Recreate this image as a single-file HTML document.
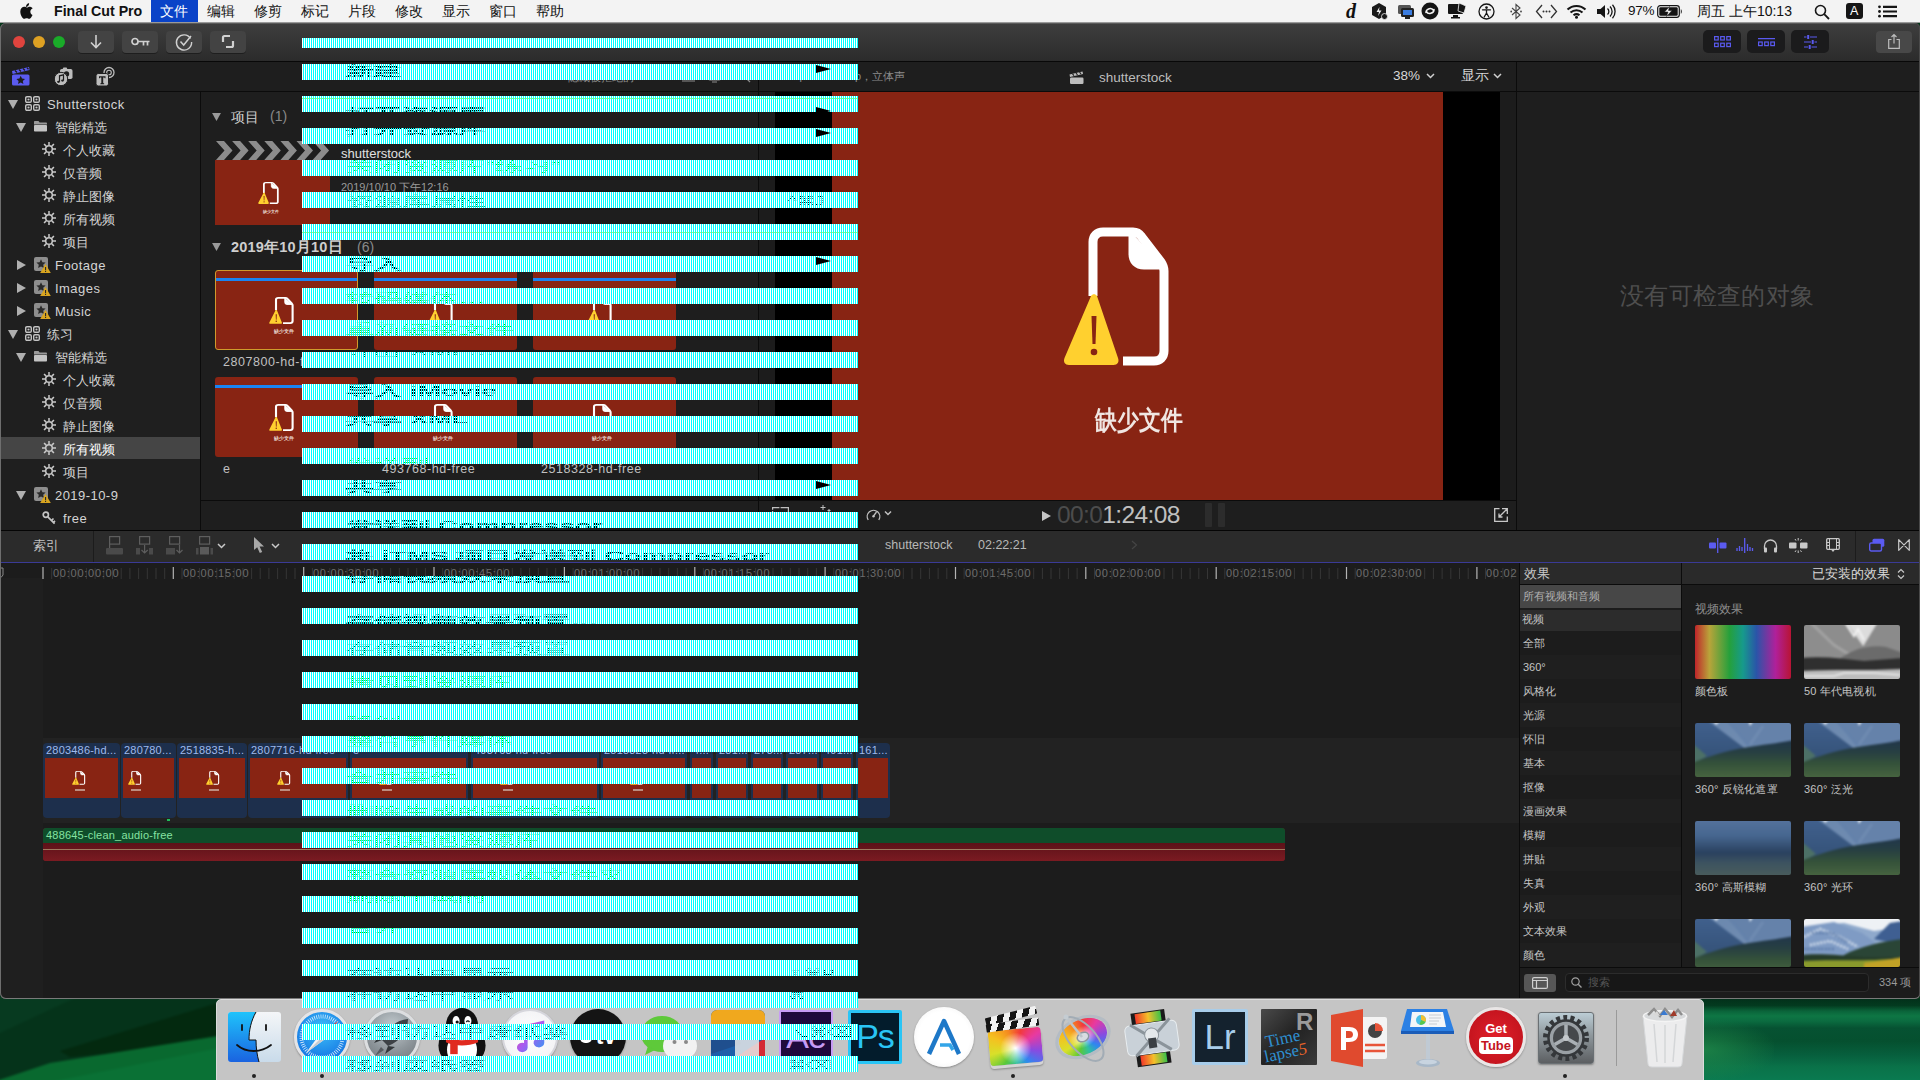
<!DOCTYPE html>
<html><head><meta charset="utf-8"><title>Final Cut Pro</title>
<style>
*{box-sizing:border-box;margin:0;padding:0}
html,body{width:1920px;height:1080px;overflow:hidden;background:#05381a;font-family:"Liberation Sans",sans-serif;}
#root{position:absolute;left:0;top:0;width:1920px;height:1080px;overflow:hidden;}
.abs{position:absolute}
.t{position:absolute;white-space:nowrap;line-height:1}
svg{position:absolute;overflow:visible}
#menubar{position:absolute;left:0;top:0;width:1920px;height:22px;background:#f3f3f3;}
#menubar .t{font-size:14px;color:#111;top:4px}
#win{position:absolute;left:0;top:23px;width:1920px;height:976px;background:#1e1e1e;border-radius:6px 5px 5px 6px;overflow:hidden;}
#winb{position:absolute;left:0;top:23px;width:1920px;height:976px;border-radius:6px 5px 5px 6px;box-shadow:inset 1px 0 0 #6e6e6e,inset 0 -1px 0 #7a7a7a,inset -1px 0 0 #4a4a4a;pointer-events:none}
.tb{position:absolute;height:22px;top:8px;width:36px;border-radius:4px;background:#434343;box-shadow:0 1px 0 rgba(0,0,0,.35)}
.side .t{font-size:13px;color:#d4d4d4}
.stripe{position:absolute;left:0;width:556px;height:16px;background:#fff;overflow:hidden}
.stripe:after{content:"";position:absolute;left:0;top:0;width:556px;height:16px;background-image:linear-gradient(90deg,rgba(0,255,255,0) 50%,#00ffff 50%);background-size:2px 16px;z-index:1}
.stripe span{position:absolute;white-space:nowrap;font-size:14px;line-height:16px;left:44px;color:#000;transform:scaleX(2);transform-origin:0 0;letter-spacing:0}
.stripe i{position:absolute;display:block;z-index:2}
.stripe b{position:absolute;display:block;z-index:1;left:0;width:556px;height:1px;background:#fff}
</style></head><body><div id="root">

<div class="abs" style="left:0;top:995px;width:960px;height:85px;background:#06381c"></div>
<div class="abs" style="left:0;top:995px;width:220px;height:85px;overflow:hidden"><svg style="left:-4px;top:-4px;filter:blur(1.2px)" width="228" height="93" viewBox="-4 -4 228 93"><rect x="-4" y="-4" width="228" height="93" fill="#05331a"/><path d="M-4 -4H90L-4 40z" fill="#073a20"/><path d="M60 56L224 6V48L70 62z" fill="#03290f"/><path d="M-4 86L50 68 224 40V93H-4z" fill="#09692f"/><path d="M40 89L224 52V93H40z" fill="#0a7135"/></svg></div>
<div class="abs" style="left:960px;top:999px;width:960px;height:81px;background:#0a6a42"></div>
<div class="abs" style="left:1700px;top:999px;width:220px;height:81px;background:linear-gradient(180deg,#02301a 0%,#033a1f 8%,#0a643a 15%,#0e7644 21%,#0b6c40 27%,#065232 36%,#05502f 52%,#07603e 70%,#0a7249 84%,#0a7a50 100%)"></div>
<div class="abs" style="left:1704px;top:1020px;width:70px;height:60px;background:radial-gradient(ellipse at 0% 50%,rgba(34,140,74,.75) 0%,rgba(34,140,74,0) 75%)"></div>

<div id="menubar">
<svg style="left:19px;top:3px" width="15" height="17" viewBox="0 0 170 200"><path fill="#111" d="M150 68c-1 1-20 11-20 35 0 27 24 37 25 37 0 1-4 13-12 25-8 11-15 21-27 21s-15-7-29-7c-13 0-18 7-29 7s-18-10-27-22C20 148 12 124 12 101c0-37 24-56 47-56 12 0 23 8 30 8 7 0 19-9 33-9 5 0 24 1 36 18zM106 33c6-7 10-17 10-26 0-1 0-3-1-4-9 0-20 6-27 14-5 6-10 16-10 26 0 1 0 3 1 3h2c8 0 19-6 25-13z"/></svg>
<div class="t" style="left:54px;font-weight:bold;font-size:14.2px;top:3.5px">Final Cut Pro</div>
<div class="abs" style="left:151px;top:0;width:47px;height:22px;background:#0a43c8"></div>
<div class="t" style="left:160px;color:#fff;font-size:14px;width:28.0px;text-align-last:justify">文件</div>
<div class="t" style="left:207px;font-size:14px;width:28.0px;text-align-last:justify">编辑</div>
<div class="t" style="left:254px;font-size:14px;width:28.0px;text-align-last:justify">修剪</div>
<div class="t" style="left:301px;font-size:14px;width:28.0px;text-align-last:justify">标记</div>
<div class="t" style="left:348px;font-size:14px;width:28.0px;text-align-last:justify">片段</div>
<div class="t" style="left:395px;font-size:14px;width:28.0px;text-align-last:justify">修改</div>
<div class="t" style="left:442px;font-size:14px;width:28.0px;text-align-last:justify">显示</div>
<div class="t" style="left:489px;font-size:14px;width:28.0px;text-align-last:justify">窗口</div>
<div class="t" style="left:536px;font-size:14px;width:28.0px;text-align-last:justify">帮助</div>
<div class="t" style="left:1346px;top:1px;font-family:'Liberation Serif',serif;font-style:italic;font-weight:bold;font-size:20px">d</div>
<svg style="left:1370px;top:3px" width="18" height="17" viewBox="0 0 18 17"><path d="M9 0l7 4v8l-7 4-7-4V4z" fill="#1a1a1a"/><path d="M9.5 4l-3 5h2.5l-1 4 3.5-5.5H9z" fill="#f3f3f3"/><circle cx="14.5" cy="13.5" r="3" fill="#1a1a1a" stroke="#f3f3f3" stroke-width=".8"/></svg>
<svg style="left:1397px;top:4px" width="18" height="16" viewBox="0 0 18 16"><rect x="1" y="1" width="13" height="9" rx="1.5" fill="#555"/><rect x="4" y="4" width="13" height="9" rx="1.5" fill="#222"/><rect x="6" y="6" width="9" height="5" fill="#3b7de0"/><rect x="8" y="13" width="5" height="2" fill="#222"/></svg>
<svg style="left:1421px;top:2px" width="18" height="18" viewBox="0 0 18 18"><circle cx="9" cy="9" r="8.5" fill="#151515"/><path d="M5 10.5c0-4 6-5.5 7.5-2M13 7.5c0 4-6 5.500-7.500 2" stroke="#f3f3f3" stroke-width="1.6" fill="none" stroke-linecap="round"/></svg>
<svg style="left:1447px;top:3px" width="20" height="17" viewBox="0 0 20 17"><rect x="1" y="1" width="15" height="10" rx="1" fill="#151515"/><rect x="6" y="12" width="5" height="2" fill="#151515"/><rect x="4" y="14" width="9" height="1.5" fill="#151515"/><path d="M12 0l7 3-2 7-6-2z" fill="#151515" stroke="#f3f3f3" stroke-width=".8"/></svg>
<svg style="left:1478px;top:3px" width="17" height="17" viewBox="0 0 17 17"><circle cx="8.500" cy="8.500" r="7.500" fill="none" stroke="#151515" stroke-width="1.3"/><circle cx="8.500" cy="4.600" r="1.300" fill="#151515"/><path d="M4.500 6.800h8M8.500 6.800v3.500M8.500 10l-2.300 4M8.500 10l2.300 4" stroke="#151515" stroke-width="1.300" fill="none" stroke-linecap="round"/></svg>
<svg style="left:1510px;top:3px" width="12" height="17" viewBox="0 0 12 17"><path d="M2 5l8 7-4 3.500V1.500L10 5l-8 7" stroke="#444" stroke-width="1.100" fill="none"/><circle cx="1.200" cy="8.500" r=".9" fill="#444"/><circle cx="11" cy="8.500" r=".9" fill="#444"/></svg>
<svg style="left:1535px;top:4px" width="23" height="15" viewBox="0 0 23 15"><path d="M7 1L1.500 7.500 7 14M16 1l5.500 6.500L16 14" stroke="#333" stroke-width="1.300" fill="none"/><circle cx="8.500" cy="7.500" r="1" fill="#333"/><circle cx="11.500" cy="7.500" r="1" fill="#333"/><circle cx="14.500" cy="7.500" r="1" fill="#333"/></svg>
<svg style="left:1566px;top:4px" width="21" height="15" viewBox="0 0 21 15"><path d="M1.500 5.500a13 13 0 0 1 18 0M4.500 8.500a9 9 0 0 1 12 0M7.500 11.300a4.800 4.800 0 0 1 6 0" stroke="#151515" stroke-width="2" fill="none" stroke-linecap="butt"/><circle cx="10.500" cy="13.300" r="1.500" fill="#151515"/></svg>
<svg style="left:1596px;top:4px" width="20" height="15" viewBox="0 0 20 15"><path d="M1 5h3.500L9 1v13L4.500 10H1z" fill="#151515"/><path d="M11.500 4.500a4 4 0 0 1 0 6M14 2.500a7 7 0 0 1 0 10M16.500 .8a10 10 0 0 1 0 13.400" stroke="#151515" stroke-width="1.300" fill="none"/></svg>
<div class="t" style="left:1628px;font-size:13.5px;top:4px;letter-spacing:-.3px">97%</div>
<svg style="left:1657px;top:5px" width="26" height="13" viewBox="0 0 26 13"><rect x=".7" y=".7" width="21.600" height="11.600" rx="2.500" fill="none" stroke="#151515" stroke-width="1.200"/><rect x="2.300" y="2.300" width="18.400" height="8.400" rx="1.200" fill="#151515"/><path d="M23.800 4.200v4.600c1.300-.4 1.300-4.200 0-4.600z" fill="#151515"/><path d="M12.500 1.500l-5 5.500h3.500l-1.500 4.500 5.500-6h-3.500z" fill="#f3f3f3" stroke="#151515" stroke-width=".5"/></svg>
<div class="t" style="left:1697px;font-size:14px;top:4px">周五 上午10:13</div>
<svg style="left:1814px;top:4px" width="16" height="16" viewBox="0 0 16 16"><circle cx="6.500" cy="6.500" r="5" fill="none" stroke="#151515" stroke-width="1.600"/><path d="M10.200 10.200l4.800 4.800" stroke="#151515" stroke-width="1.800"/></svg>
<div class="abs" style="left:1846px;top:3px;width:17px;height:16px;border-radius:3px;background:#151515"></div><div class="t" style="left:1850px;top:5px;color:#fff;font-size:12.500px">A</div>
<svg style="left:1878px;top:5px" width="20" height="13" viewBox="0 0 20 13"><circle cx="1.500" cy="1.800" r="1.400" fill="#151515"/><circle cx="1.500" cy="6.500" r="1.400" fill="#151515"/><circle cx="1.500" cy="11.200" r="1.400" fill="#151515"/><path d="M5 1.800h14M5 6.500h14M5 11.200h14" stroke="#151515" stroke-width="2.200"/></svg>
</div>
<div class="abs" style="left:0;top:22px;width:1920px;height:1px;background:#9a9a9a"></div>
<div id="win">
<div class="abs" style="left:0;top:0;width:1920px;height:38px;background:linear-gradient(#3e3e3e,#2b2b2b);border-top:1px solid #5a5a5a"></div>
<div class="abs" style="left:0;top:38px;width:1920px;height:1px;background:#080808"></div>
<div class="abs" style="left:13px;top:13px;width:12px;height:12px;border-radius:6px;background:#e0443e"></div>
<div class="abs" style="left:33px;top:13px;width:12px;height:12px;border-radius:6px;background:#dea123"></div>
<div class="abs" style="left:53px;top:13px;width:12px;height:12px;border-radius:6px;background:#1aab29"></div>
<div class="tb" style="left:78px"></div>
<div class="tb" style="left:122px"></div>
<div class="tb" style="left:166px"></div>
<div class="tb" style="left:210px"></div>
<svg style="left:90px;top:12px" width="12" height="14" viewBox="0 0 12 14"><path d="M6 0v12M1 7.500l5 5 5-5" stroke="#d0d0d0" stroke-width="1.600" fill="none"/></svg>
<svg style="left:131px;top:14px" width="19" height="10" viewBox="0 0 19 10"><circle cx="4" cy="4.500" r="3" fill="none" stroke="#d0d0d0" stroke-width="1.700"/><path d="M7 4.500h11.500M12.500 4.500v4M16.500 4.500v4" stroke="#d0d0d0" stroke-width="1.700" fill="none"/></svg>
<svg style="left:175px;top:10px" width="18" height="18" viewBox="0 0 18 18"><path d="M15.500 5.500A7.600 7.600 0 1 0 16.600 9" stroke="#d0d0d0" stroke-width="1.400" fill="none"/><path d="M5.500 8.500l3.200 3.500L16 3" stroke="#d0d0d0" stroke-width="1.500" fill="none"/></svg>
<svg style="left:221px;top:11px" width="14" height="15" viewBox="0 0 14 15"><path d="M7 2H3.500C2.500 2 2 2.500 2 3.500V8M7 13h3.500c1 0 1.500-.5 1.500-1.500V7" stroke="#d0d0d0" stroke-width="2.200" fill="none"/><path d="M7 2h2M7 13H5" stroke="#d0d0d0" stroke-width="2.200"/></svg>
<div class="abs" style="left:1703px;top:7px;width:38px;height:23px;border-radius:5px;background:#1b1b1c"></div>
<div class="abs" style="left:1747px;top:7px;width:38px;height:23px;border-radius:5px;background:#1b1b1c"></div>
<div class="abs" style="left:1791px;top:7px;width:38px;height:23px;border-radius:5px;background:#1b1b1c"></div>
<svg style="left:1714px;top:13px" width="17" height="12" viewBox="0 0 17 12"><g fill="none" stroke="#5a5af0" stroke-width="1.200"><rect x=".6" y=".6" width="3.600" height="3.400"/><rect x="6.700" y=".6" width="3.600" height="3.400"/><rect x="12.800" y=".6" width="3.600" height="3.400"/><rect x=".6" y="7.200" width="3.600" height="3.400"/><rect x="6.700" y="7.200" width="3.600" height="3.400"/><rect x="12.800" y="7.200" width="3.600" height="3.400"/></g></svg>
<svg style="left:1758px;top:15px" width="17" height="10" viewBox="0 0 17 10"><g fill="none" stroke="#5a5af0" stroke-width="1.200"><path d="M0 .6h17"/><rect x=".6" y="4" width="3.600" height="3.600"/><rect x="6.700" y="4" width="3.600" height="3.600"/><rect x="12.800" y="4" width="3.600" height="3.600"/></g></svg>
<svg style="left:1804px;top:12px" width="13" height="14" viewBox="0 0 13 14"><g stroke="#5a5af0" stroke-width="1.100" fill="none"><path d="M0 2h2.500M6 2h7M0 7h7M10.500 7H13M0 12h4M7.500 12H13"/><path d="M4.200 0v4M8.700 5v4M5.700 10v4" stroke-width="2"/></g></svg>
<div class="abs" style="left:1876px;top:8px;width:36px;height:22px;border-radius:4px;background:#484848"></div>
<svg style="left:1888px;top:11px" width="12" height="15" viewBox="0 0 12 15"><path d="M3.500 5.500H.7v8.800h10.600V5.500H8.500M6 9.500V.8M3.500 3L6 .6 8.500 3" stroke="#bdbdbd" stroke-width="1.200" fill="none"/></svg>
<div class="abs" style="left:0;top:39px;width:1920px;height:29px;background:#1e1e1e"></div>
<div class="abs" style="left:0;top:68px;width:1920px;height:1px;background:#0b0b0b"></div>
<svg style="left:12px;top:44px" width="18" height="19" viewBox="0 0 18 19"><path d="M0 4l17-4 .6 3L.6 7z" fill="#5b5bf0"/><path d="M3 3.500l2 2M7 2.500l2 2M11 1.600l2 2M15 .7l1.500 1.500" stroke="#1e1e1e" stroke-width="1.400"/><rect x="0" y="7.500" width="17.500" height="11" rx="1.500" fill="#5b5bf0"/><path d="M8.700 8.800l1.300 2.800 3 .3-2.200 2 .6 3-2.700-1.500L6 16.900l.6-3-2.200-2 3-.3z" fill="#1e1e1e"/></svg>
<svg style="left:54px;top:44px" width="19" height="19" viewBox="0 0 19 19"><rect x="6" y="2" width="12.500" height="10" rx="1.800" fill="#bdbdbd"/><rect x="9" y=".5" width="4" height="2.500" rx=".8" fill="#bdbdbd"/><circle cx="12.500" cy="7" r="2.700" fill="#1e1e1e"/><circle cx="7" cy="12" r="6.700" fill="#bdbdbd" stroke="#1e1e1e" stroke-width="1"/><path d="M5.500 14.800V8.800l4-1v5.800" stroke="#1e1e1e" stroke-width="1.200" fill="none"/><ellipse cx="4.500" cy="14.800" rx="1.400" ry="1.100" fill="#1e1e1e"/><ellipse cx="8.500" cy="13.600" rx="1.400" ry="1.100" fill="#1e1e1e"/></svg>
<svg style="left:96px;top:44px" width="19" height="19" viewBox="0 0 19 19"><circle cx="13" cy="5.500" r="5" fill="none" stroke="#bdbdbd" stroke-width="1.300"/><circle cx="13" cy="5.500" r="2.300" fill="none" stroke="#bdbdbd" stroke-width="1.100"/><rect x="0" y="6.500" width="12.500" height="12.500" rx="2.200" fill="#bdbdbd" stroke="#1e1e1e" stroke-width="1"/><path d="M3 9.300h6.500v2h-.8l-.3-.8H7.200v5.600l1 .3v.8H4.300v-.8l1-.3v-5.600H4.100l-.3.800H3z" fill="#1e1e1e"/></svg>
<div class="side abs" style="left:0;top:69px;width:200px;height:438px;background:#1f1f1f">

</div>
<div class="abs" style="left:200px;top:69px;width:1px;height:438px;background:#0b0b0b"></div>
<div class="abs" style="left:0;top:414px;width:200px;height:22px;background:#454545"></div>
<div class="side">
<svg style="left:8px;top:77px" width="10" height="9" viewBox="0 0 10 9"><path d="M0 0h10L5 9z" fill="#b0b0b0"/></svg>
<svg style="left:25px;top:73px" width="15" height="15" viewBox="0 0 15 15"><g fill="none" stroke="#c4c4c4" stroke-width="1.400"><rect x=".7" y=".7" width="5.600" height="5.600" rx="1.200"/><rect x="8.700" y=".7" width="5.600" height="5.600" rx="1.200"/><rect x=".7" y="8.700" width="5.600" height="5.600" rx="1.200"/><rect x="8.700" y="8.700" width="5.600" height="5.600" rx="1.200"/></g><g fill="#c4c4c4"><circle cx="3.500" cy="3.500" r="1.100"/><circle cx="11.500" cy="3.500" r="1.100"/><circle cx="3.500" cy="11.500" r="1.100"/><circle cx="11.500" cy="11.500" r="1.100"/></g></svg>
<div class="t" style="left:47px;top:75px;font-size:13px;letter-spacing:.45px">Shutterstock</div>
<svg style="left:16px;top:100px" width="10" height="9" viewBox="0 0 10 9"><path d="M0 0h10L5 9z" fill="#b0b0b0"/></svg>
<svg style="left:34px;top:98px" width="13" height="10.500" viewBox="0 0 15 12"><path d="M0 1.200C0 .5.500 0 1.200 0h4l1.300 1.800h7.300c.7 0 1.200.5 1.200 1.200V4H0z" fill="#9a9a9a"/><rect x="0" y="4.600" width="15" height="7.400" rx="1" fill="#c4c4c4"/></svg>
<div class="t" style="left:55px;top:98px;font-size:13px;width:52.0px;text-align-last:justify">智能精选</div>
<svg style="left:42px;top:119px" width="14" height="14" viewBox="0 0 14 14"><circle cx="7" cy="7" r="3.300" fill="none" stroke="#c9c9c9" stroke-width="1.500"/><path d="M7 0v3M7 11v3M0 7h3M11 7h3M2.050 2.050l2.100 2.100M9.850 9.850l2.100 2.100M2.050 11.950l2.100-2.100M9.850 4.150l2.100-2.100" stroke="#c9c9c9" stroke-width="1.500"/></svg>
<div class="t" style="left:63px;top:121px;font-size:13px;width:52.0px;text-align-last:justify">个人收藏</div>
<svg style="left:42px;top:142px" width="14" height="14" viewBox="0 0 14 14"><circle cx="7" cy="7" r="3.300" fill="none" stroke="#c9c9c9" stroke-width="1.500"/><path d="M7 0v3M7 11v3M0 7h3M11 7h3M2.050 2.050l2.100 2.100M9.850 9.850l2.100 2.100M2.050 11.950l2.100-2.100M9.850 4.150l2.100-2.100" stroke="#c9c9c9" stroke-width="1.500"/></svg>
<div class="t" style="left:63px;top:144px;font-size:13px;width:39.0px;text-align-last:justify">仅音频</div>
<svg style="left:42px;top:165px" width="14" height="14" viewBox="0 0 14 14"><circle cx="7" cy="7" r="3.300" fill="none" stroke="#c9c9c9" stroke-width="1.500"/><path d="M7 0v3M7 11v3M0 7h3M11 7h3M2.050 2.050l2.100 2.100M9.850 9.850l2.100 2.100M2.050 11.950l2.100-2.100M9.850 4.150l2.100-2.100" stroke="#c9c9c9" stroke-width="1.500"/></svg>
<div class="t" style="left:63px;top:167px;font-size:13px;width:52.0px;text-align-last:justify">静止图像</div>
<svg style="left:42px;top:188px" width="14" height="14" viewBox="0 0 14 14"><circle cx="7" cy="7" r="3.300" fill="none" stroke="#c9c9c9" stroke-width="1.500"/><path d="M7 0v3M7 11v3M0 7h3M11 7h3M2.050 2.050l2.100 2.100M9.850 9.850l2.100 2.100M2.050 11.950l2.100-2.100M9.850 4.150l2.100-2.100" stroke="#c9c9c9" stroke-width="1.500"/></svg>
<div class="t" style="left:63px;top:190px;font-size:13px;width:52.0px;text-align-last:justify">所有视频</div>
<svg style="left:42px;top:211px" width="14" height="14" viewBox="0 0 14 14"><circle cx="7" cy="7" r="3.300" fill="none" stroke="#c9c9c9" stroke-width="1.500"/><path d="M7 0v3M7 11v3M0 7h3M11 7h3M2.050 2.050l2.100 2.100M9.850 9.850l2.100 2.100M2.050 11.950l2.100-2.100M9.850 4.150l2.100-2.100" stroke="#c9c9c9" stroke-width="1.500"/></svg>
<div class="t" style="left:63px;top:213px;font-size:13px;width:26.0px;text-align-last:justify">项目</div>
<svg style="left:17px;top:237px" width="9" height="10" viewBox="0 0 9 10"><path d="M0 0v10l9-5z" fill="#b0b0b0"/></svg>
<svg style="left:34px;top:234px" width="17" height="16" viewBox="0 0 17 16"><rect x="0" y="0" width="14" height="14" rx="2" fill="#8e8e8e"/><path d="M7 2.200l1.400 3 3.200.4-2.400 2.200.7 3.200L7 9.400 4.100 11l.7-3.200L2.400 5.600l3.200-.4z" fill="#2a2a2a"/><path d="M11.500 7l5.300 9H6.200z" fill="#d9a520"/><rect x="11" y="10" width="1.100" height="3.200" fill="#2a2a2a"/><rect x="11" y="13.900" width="1.100" height="1.100" fill="#2a2a2a"/></svg>
<div class="t" style="left:55px;top:236px;font-size:13px;letter-spacing:.45px">Footage</div>
<svg style="left:17px;top:260px" width="9" height="10" viewBox="0 0 9 10"><path d="M0 0v10l9-5z" fill="#b0b0b0"/></svg>
<svg style="left:34px;top:257px" width="17" height="16" viewBox="0 0 17 16"><rect x="0" y="0" width="14" height="14" rx="2" fill="#8e8e8e"/><path d="M7 2.200l1.400 3 3.200.4-2.400 2.200.7 3.200L7 9.400 4.100 11l.7-3.200L2.400 5.600l3.200-.4z" fill="#2a2a2a"/><path d="M11.500 7l5.300 9H6.200z" fill="#d9a520"/><rect x="11" y="10" width="1.100" height="3.200" fill="#2a2a2a"/><rect x="11" y="13.900" width="1.100" height="1.100" fill="#2a2a2a"/></svg>
<div class="t" style="left:55px;top:259px;font-size:13px;letter-spacing:.45px">Images</div>
<svg style="left:17px;top:283px" width="9" height="10" viewBox="0 0 9 10"><path d="M0 0v10l9-5z" fill="#b0b0b0"/></svg>
<svg style="left:34px;top:280px" width="17" height="16" viewBox="0 0 17 16"><rect x="0" y="0" width="14" height="14" rx="2" fill="#8e8e8e"/><path d="M7 2.200l1.400 3 3.200.4-2.400 2.200.7 3.200L7 9.400 4.100 11l.7-3.200L2.400 5.600l3.200-.4z" fill="#2a2a2a"/><path d="M11.500 7l5.300 9H6.200z" fill="#d9a520"/><rect x="11" y="10" width="1.100" height="3.200" fill="#2a2a2a"/><rect x="11" y="13.900" width="1.100" height="1.100" fill="#2a2a2a"/></svg>
<div class="t" style="left:55px;top:282px;font-size:13px;letter-spacing:.45px">Music</div>
<svg style="left:8px;top:307px" width="10" height="9" viewBox="0 0 10 9"><path d="M0 0h10L5 9z" fill="#b0b0b0"/></svg>
<svg style="left:25px;top:303px" width="15" height="15" viewBox="0 0 15 15"><g fill="none" stroke="#c4c4c4" stroke-width="1.400"><rect x=".7" y=".7" width="5.600" height="5.600" rx="1.200"/><rect x="8.700" y=".7" width="5.600" height="5.600" rx="1.200"/><rect x=".7" y="8.700" width="5.600" height="5.600" rx="1.200"/><rect x="8.700" y="8.700" width="5.600" height="5.600" rx="1.200"/></g><g fill="#c4c4c4"><circle cx="3.500" cy="3.500" r="1.100"/><circle cx="11.500" cy="3.500" r="1.100"/><circle cx="3.500" cy="11.500" r="1.100"/><circle cx="11.500" cy="11.500" r="1.100"/></g></svg>
<div class="t" style="left:47px;top:305px;font-size:13px;width:26.0px;text-align-last:justify">练习</div>
<svg style="left:16px;top:330px" width="10" height="9" viewBox="0 0 10 9"><path d="M0 0h10L5 9z" fill="#b0b0b0"/></svg>
<svg style="left:34px;top:328px" width="13" height="10.500" viewBox="0 0 15 12"><path d="M0 1.200C0 .5.500 0 1.200 0h4l1.300 1.800h7.300c.7 0 1.200.5 1.200 1.200V4H0z" fill="#9a9a9a"/><rect x="0" y="4.600" width="15" height="7.400" rx="1" fill="#c4c4c4"/></svg>
<div class="t" style="left:55px;top:328px;font-size:13px;width:52.0px;text-align-last:justify">智能精选</div>
<svg style="left:42px;top:349px" width="14" height="14" viewBox="0 0 14 14"><circle cx="7" cy="7" r="3.300" fill="none" stroke="#c9c9c9" stroke-width="1.500"/><path d="M7 0v3M7 11v3M0 7h3M11 7h3M2.050 2.050l2.100 2.100M9.850 9.850l2.100 2.100M2.050 11.950l2.100-2.100M9.850 4.150l2.100-2.100" stroke="#c9c9c9" stroke-width="1.500"/></svg>
<div class="t" style="left:63px;top:351px;font-size:13px;width:52.0px;text-align-last:justify">个人收藏</div>
<svg style="left:42px;top:372px" width="14" height="14" viewBox="0 0 14 14"><circle cx="7" cy="7" r="3.300" fill="none" stroke="#c9c9c9" stroke-width="1.500"/><path d="M7 0v3M7 11v3M0 7h3M11 7h3M2.050 2.050l2.100 2.100M9.850 9.850l2.100 2.100M2.050 11.950l2.100-2.100M9.850 4.150l2.100-2.100" stroke="#c9c9c9" stroke-width="1.500"/></svg>
<div class="t" style="left:63px;top:374px;font-size:13px;width:39.0px;text-align-last:justify">仅音频</div>
<svg style="left:42px;top:395px" width="14" height="14" viewBox="0 0 14 14"><circle cx="7" cy="7" r="3.300" fill="none" stroke="#c9c9c9" stroke-width="1.500"/><path d="M7 0v3M7 11v3M0 7h3M11 7h3M2.050 2.050l2.100 2.100M9.850 9.850l2.100 2.100M2.050 11.950l2.100-2.100M9.850 4.150l2.100-2.100" stroke="#c9c9c9" stroke-width="1.500"/></svg>
<div class="t" style="left:63px;top:397px;font-size:13px;width:52.0px;text-align-last:justify">静止图像</div>
<svg style="left:42px;top:418px" width="14" height="14" viewBox="0 0 14 14"><circle cx="7" cy="7" r="3.300" fill="none" stroke="#c9c9c9" stroke-width="1.500"/><path d="M7 0v3M7 11v3M0 7h3M11 7h3M2.050 2.050l2.100 2.100M9.850 9.850l2.100 2.100M2.050 11.950l2.100-2.100M9.850 4.150l2.100-2.100" stroke="#c9c9c9" stroke-width="1.500"/></svg>
<div class="t" style="left:63px;top:420px;font-size:13px;color:#fff;width:52.0px;text-align-last:justify">所有视频</div>
<svg style="left:42px;top:441px" width="14" height="14" viewBox="0 0 14 14"><circle cx="7" cy="7" r="3.300" fill="none" stroke="#c9c9c9" stroke-width="1.500"/><path d="M7 0v3M7 11v3M0 7h3M11 7h3M2.050 2.050l2.100 2.100M9.850 9.850l2.100 2.100M2.050 11.950l2.100-2.100M9.850 4.150l2.100-2.100" stroke="#c9c9c9" stroke-width="1.500"/></svg>
<div class="t" style="left:63px;top:443px;font-size:13px;width:26.0px;text-align-last:justify">项目</div>
<svg style="left:16px;top:468px" width="10" height="9" viewBox="0 0 10 9"><path d="M0 0h10L5 9z" fill="#b0b0b0"/></svg>
<svg style="left:34px;top:464px" width="17" height="16" viewBox="0 0 17 16"><rect x="0" y="0" width="14" height="14" rx="2" fill="#8e8e8e"/><path d="M7 2.200l1.400 3 3.200.4-2.400 2.200.7 3.200L7 9.400 4.100 11l.7-3.200L2.400 5.600l3.200-.4z" fill="#2a2a2a"/><path d="M11.500 7l5.300 9H6.200z" fill="#d9a520"/><rect x="11" y="10" width="1.100" height="3.200" fill="#2a2a2a"/><rect x="11" y="13.900" width="1.100" height="1.100" fill="#2a2a2a"/></svg>
<div class="t" style="left:55px;top:466px;font-size:13px;letter-spacing:.45px">2019-10-9</div>
<svg style="left:42px;top:488px" width="14" height="14" viewBox="0 0 14 14"><circle cx="3.800" cy="3.800" r="2.600" fill="none" stroke="#c4c4c4" stroke-width="1.700"/><path d="M5.800 5.800l6.800 6.800M9.500 9.500l2-2M11.400 11.400l1.600-1.600" stroke="#c4c4c4" stroke-width="1.700" fill="none"/></svg>
<div class="t" style="left:63px;top:489px;font-size:13px;letter-spacing:.45px">free</div>
</div>
<div class="abs" style="left:201px;top:69px;width:557px;height:408px;background:#1e1e1e"></div>
<div class="abs" style="left:758px;top:39px;width:1px;height:468px;background:#0b0b0b"></div>
<div class="t" style="left:568px;top:49px;font-size:11px;color:#8c8c8c;width:66.0px;text-align-last:justify">隐藏被拒绝的</div>
<div class="t" style="left:775px;top:48px;font-size:11px;color:#8c8c8c">1080p HD 23.98p，立体声</div>
<svg style="left:212px;top:90px" width="9" height="8" viewBox="0 0 10 9"><path d="M0 0h10L5 9z" fill="#9a9a9a"/></svg>
<div class="t" style="left:231px;top:87px;font-size:14px;color:#cfcfcf;width:28.0px;text-align-last:justify">项目</div>
<div class="t" style="left:270px;top:86px;font-size:14px;color:#8a8a8a">(1)</div>
<svg style="left:216px;top:118px" width="114" height="19" viewBox="0 0 114 19"><path d="M0.0 0h8l8.500 9.500-8.500 9.500h-8l8.500-9.500z" fill="#8c8c8c"/><path d="M16.1 0h8l8.500 9.500-8.500 9.500h-8l8.500-9.500z" fill="#8c8c8c"/><path d="M32.2 0h8l8.500 9.500-8.500 9.500h-8l8.500-9.500z" fill="#8c8c8c"/><path d="M48.3 0h8l8.500 9.500-8.500 9.500h-8l8.500-9.500z" fill="#8c8c8c"/><path d="M64.4 0h8l8.500 9.500-8.500 9.500h-8l8.500-9.500z" fill="#8c8c8c"/><path d="M80.5 0h8l8.500 9.500-8.500 9.500h-8l8.500-9.500z" fill="#8c8c8c"/><path d="M96.6 0h8l8.500 9.500-8.500 9.500h-8l8.500-9.500z" fill="#8c8c8c"/></svg>
<div class="abs" style="left:215px;top:137px;width:115px;height:65px;background:#882413"></div>
<svg style="left:258.0px;top:159.0px" width="21.0" height="22.1" viewBox="0 0 107 138" preserveAspectRatio="none"><path d="M30 68V14c0-6 4-10 10-10h30c4 0 6 1 8 4l20 26c2 3 3 5 3 9v80c0 6-4 10-10 10H60" fill="none" stroke="#fff" stroke-width="9" stroke-linejoin="round"/><path d="M68 4v22c0 8 5 13 13 13h20" fill="#fff" stroke="#fff" stroke-width="5"/><path d="M28 68c1.500-2.500 4.500-2.500 6 0l21 62c1.500 4-.5 7-4.500 7H6c-4 0-6-3-4.500-7z" fill="#ffd02f"/><path d="M28.500 88h5l-1 28h-3z" fill="#882413"/><circle cx="31" cy="124" r="3.300" fill="#882413"/></svg><div class="t" style="left:251.0px;top:186.5px;width:40px;text-align:center;font-size:4.1px;color:#e8d8d0;font-weight:bold">缺少文件</div>
<div class="t" style="left:341px;top:124px;font-size:13px;color:#e0e0e0">shutterstock</div>
<div class="t" style="left:341px;top:159px;font-size:11px;color:#9a9a9a">2019/10/10 下午12:16</div>
<svg style="left:212px;top:220px" width="9" height="8" viewBox="0 0 10 9"><path d="M0 0h10L5 9z" fill="#9a9a9a"/></svg>
<div class="t" style="left:231px;top:217px;font-size:14.500px;color:#cfcfcf;font-weight:bold;letter-spacing:.2px">2019年10月10日</div>
<div class="t" style="left:357px;top:217px;font-size:14px;color:#8a8a8a">(6)</div>
<div class="abs" style="left:215px;top:247px;width:143px;height:80px;background:#882413;border-radius:3px;border:1px solid #d09a2c;"></div>
<div class="abs" style="left:216px;top:255px;width:141px;height:3px;background:#1a84f2"></div>
<svg style="left:269.0px;top:274.0px" width="25.0" height="27.0" viewBox="0 0 107 138" preserveAspectRatio="none"><path d="M30 68V14c0-6 4-10 10-10h30c4 0 6 1 8 4l20 26c2 3 3 5 3 9v80c0 6-4 10-10 10H60" fill="none" stroke="#fff" stroke-width="9" stroke-linejoin="round"/><path d="M68 4v22c0 8 5 13 13 13h20" fill="#fff" stroke="#fff" stroke-width="5"/><path d="M28 68c1.500-2.500 4.500-2.500 6 0l21 62c1.500 4-.5 7-4.500 7H6c-4 0-6-3-4.500-7z" fill="#ffd02f"/><path d="M28.500 88h5l-1 28h-3z" fill="#882413"/><circle cx="31" cy="124" r="3.300" fill="#882413"/></svg><div class="t" style="left:264.0px;top:306.5px;width:40px;text-align:center;font-size:4.9px;color:#e8d8d0;font-weight:bold">缺少文件</div>
<div class="t" style="left:223px;top:333px;font-size:12.500px;color:#c0c0c0;letter-spacing:.55px">2807800-hd-free</div>
<div class="abs" style="left:374px;top:247px;width:143px;height:80px;background:#882413;border-radius:3px;"></div>
<div class="abs" style="left:374px;top:255px;width:143px;height:3px;background:#1a84f2"></div>
<svg style="left:428.0px;top:274.0px" width="25.0" height="27.0" viewBox="0 0 107 138" preserveAspectRatio="none"><path d="M30 68V14c0-6 4-10 10-10h30c4 0 6 1 8 4l20 26c2 3 3 5 3 9v80c0 6-4 10-10 10H60" fill="none" stroke="#fff" stroke-width="9" stroke-linejoin="round"/><path d="M68 4v22c0 8 5 13 13 13h20" fill="#fff" stroke="#fff" stroke-width="5"/><path d="M28 68c1.500-2.500 4.500-2.500 6 0l21 62c1.500 4-.5 7-4.500 7H6c-4 0-6-3-4.500-7z" fill="#ffd02f"/><path d="M28.500 88h5l-1 28h-3z" fill="#882413"/><circle cx="31" cy="124" r="3.300" fill="#882413"/></svg><div class="t" style="left:423.0px;top:306.5px;width:40px;text-align:center;font-size:4.9px;color:#e8d8d0;font-weight:bold">缺少文件</div>
<div class="abs" style="left:533px;top:247px;width:143px;height:80px;background:#882413;border-radius:3px;"></div>
<div class="abs" style="left:533px;top:255px;width:143px;height:3px;background:#1a84f2"></div>
<svg style="left:587.0px;top:274.0px" width="25.0" height="27.0" viewBox="0 0 107 138" preserveAspectRatio="none"><path d="M30 68V14c0-6 4-10 10-10h30c4 0 6 1 8 4l20 26c2 3 3 5 3 9v80c0 6-4 10-10 10H60" fill="none" stroke="#fff" stroke-width="9" stroke-linejoin="round"/><path d="M68 4v22c0 8 5 13 13 13h20" fill="#fff" stroke="#fff" stroke-width="5"/><path d="M28 68c1.500-2.500 4.500-2.500 6 0l21 62c1.500 4-.5 7-4.500 7H6c-4 0-6-3-4.500-7z" fill="#ffd02f"/><path d="M28.500 88h5l-1 28h-3z" fill="#882413"/><circle cx="31" cy="124" r="3.300" fill="#882413"/></svg><div class="t" style="left:582.0px;top:306.5px;width:40px;text-align:center;font-size:4.9px;color:#e8d8d0;font-weight:bold">缺少文件</div>
<div class="abs" style="left:215px;top:354px;width:143px;height:80px;background:#882413;border-radius:3px;"></div>
<div class="abs" style="left:215px;top:362px;width:143px;height:3px;background:#1a84f2"></div>
<svg style="left:269.0px;top:381.0px" width="25.0" height="27.0" viewBox="0 0 107 138" preserveAspectRatio="none"><path d="M30 68V14c0-6 4-10 10-10h30c4 0 6 1 8 4l20 26c2 3 3 5 3 9v80c0 6-4 10-10 10H60" fill="none" stroke="#fff" stroke-width="9" stroke-linejoin="round"/><path d="M68 4v22c0 8 5 13 13 13h20" fill="#fff" stroke="#fff" stroke-width="5"/><path d="M28 68c1.500-2.500 4.500-2.500 6 0l21 62c1.500 4-.5 7-4.500 7H6c-4 0-6-3-4.500-7z" fill="#ffd02f"/><path d="M28.500 88h5l-1 28h-3z" fill="#882413"/><circle cx="31" cy="124" r="3.300" fill="#882413"/></svg><div class="t" style="left:264.0px;top:413.5px;width:40px;text-align:center;font-size:4.9px;color:#e8d8d0;font-weight:bold">缺少文件</div>
<div class="t" style="left:223px;top:440px;font-size:12.500px;color:#c0c0c0;letter-spacing:.55px">e</div>
<div class="abs" style="left:374px;top:354px;width:143px;height:80px;background:#882413;border-radius:3px;"></div>
<div class="abs" style="left:374px;top:362px;width:143px;height:3px;background:#1a84f2"></div>
<svg style="left:428.0px;top:381.0px" width="25.0" height="27.0" viewBox="0 0 107 138" preserveAspectRatio="none"><path d="M30 68V14c0-6 4-10 10-10h30c4 0 6 1 8 4l20 26c2 3 3 5 3 9v80c0 6-4 10-10 10H60" fill="none" stroke="#fff" stroke-width="9" stroke-linejoin="round"/><path d="M68 4v22c0 8 5 13 13 13h20" fill="#fff" stroke="#fff" stroke-width="5"/><path d="M28 68c1.500-2.500 4.500-2.500 6 0l21 62c1.500 4-.5 7-4.500 7H6c-4 0-6-3-4.500-7z" fill="#ffd02f"/><path d="M28.500 88h5l-1 28h-3z" fill="#882413"/><circle cx="31" cy="124" r="3.300" fill="#882413"/></svg><div class="t" style="left:423.0px;top:413.5px;width:40px;text-align:center;font-size:4.9px;color:#e8d8d0;font-weight:bold">缺少文件</div>
<div class="t" style="left:382px;top:440px;font-size:12.500px;color:#c0c0c0;letter-spacing:.55px">493768-hd-free</div>
<div class="abs" style="left:533px;top:354px;width:143px;height:80px;background:#882413;border-radius:3px;"></div>
<div class="abs" style="left:533px;top:362px;width:143px;height:3px;background:#1a84f2"></div>
<svg style="left:587.0px;top:381.0px" width="25.0" height="27.0" viewBox="0 0 107 138" preserveAspectRatio="none"><path d="M30 68V14c0-6 4-10 10-10h30c4 0 6 1 8 4l20 26c2 3 3 5 3 9v80c0 6-4 10-10 10H60" fill="none" stroke="#fff" stroke-width="9" stroke-linejoin="round"/><path d="M68 4v22c0 8 5 13 13 13h20" fill="#fff" stroke="#fff" stroke-width="5"/><path d="M28 68c1.500-2.500 4.500-2.500 6 0l21 62c1.500 4-.5 7-4.500 7H6c-4 0-6-3-4.500-7z" fill="#ffd02f"/><path d="M28.500 88h5l-1 28h-3z" fill="#882413"/><circle cx="31" cy="124" r="3.300" fill="#882413"/></svg><div class="t" style="left:582.0px;top:413.5px;width:40px;text-align:center;font-size:4.9px;color:#e8d8d0;font-weight:bold">缺少文件</div>
<div class="t" style="left:541px;top:440px;font-size:12.500px;color:#c0c0c0;letter-spacing:.55px">2518328-hd-free</div>
<div class="abs" style="left:201px;top:477px;width:557px;height:1px;background:#0b0b0b"></div>
<div class="abs" style="left:0px;top:507px;width:1920px;height:1px;background:#050505"></div>
<div class="abs" style="left:759px;top:69px;width:757px;height:408px;background:#1c1c1c"></div>
<div class="abs" style="left:775px;top:69px;width:725px;height:408px;background:#000"></div>
<div class="abs" style="left:832px;top:69px;width:611px;height:408px;background:#882413"></div>
<svg style="left:1063.0px;top:205.0px" width="107.0" height="138.0" viewBox="0 0 107 138" preserveAspectRatio="none"><path d="M30 68V14c0-6 4-10 10-10h30c4 0 6 1 8 4l20 26c2 3 3 5 3 9v80c0 6-4 10-10 10H60" fill="none" stroke="#fff" stroke-width="9" stroke-linejoin="round"/><path d="M68 4v22c0 8 5 13 13 13h20" fill="#fff" stroke="#fff" stroke-width="5"/><path d="M28 68c1.500-2.500 4.500-2.500 6 0l21 62c1.500 4-.5 7-4.500 7H6c-4 0-6-3-4.500-7z" fill="#ffd02f"/><path d="M28.500 88h5l-1 28h-3z" fill="#882413"/><circle cx="31" cy="124" r="3.300" fill="#882413"/></svg>
<div class="t" style="left:1087px;top:384px;width:100px;text-align:center;font-size:26px;color:#f0e6e2;font-weight:bold;transform:scaleX(.84)">缺少文件</div>
<svg style="left:1069px;top:48px" width="15" height="13" viewBox="0 0 15 13"><path d="M.5 3.500L13.500.5l.5 2.500L1 6z" fill="#bdbdbd"/><rect x="1" y="6.500" width="13.500" height="6.500" rx="1.200" fill="#bdbdbd"/><path d="M3.500 2.800l1.500 1.800M7 2l1.500 1.800M10.500 1.200L12 3" stroke="#1e1e1e" stroke-width="1.100"/></svg>
<div class="t" style="left:1099px;top:48px;font-size:13.500px;color:#bdbdbd">shutterstock</div>
<div class="t" style="left:1393px;top:46px;font-size:13.500px;color:#d8d8d8">38%</div>
<svg style="left:1426px;top:50px" width="9" height="6" viewBox="0 0 9 6"><path d="M1 1l3.500 3.500L8 1" stroke="#d0d0d0" stroke-width="1.500" fill="none"/></svg>
<div class="t" style="left:1461px;top:46px;font-size:13.500px;color:#d8d8d8;width:27.0px;text-align-last:justify">显示</div>
<svg style="left:1493px;top:50px" width="9" height="6" viewBox="0 0 9 6"><path d="M1 1l3.500 3.500L8 1" stroke="#d0d0d0" stroke-width="1.500" fill="none"/></svg>
<div class="abs" style="left:759px;top:477px;width:757px;height:30px;background:#1e1e1e"></div>
<div class="abs" style="left:759px;top:477px;width:757px;height:1px;background:#0b0b0b"></div>
<svg style="left:1042px;top:488px" width="9" height="10" viewBox="0 0 9 10"><path d="M0 0v10l9-5z" fill="#c4c4c4"/></svg>
<div class="t" style="left:1057px;top:480px;font-size:24.500px;color:#4c4c4c;letter-spacing:-.6px">00:0<span style="color:#c0c0c0">1:24:08</span></div>
<div class="abs" style="left:1205px;top:480px;width:7px;height:24px;background:#2c2c2c;border-radius:1px"></div><div class="abs" style="left:1218px;top:480px;width:7px;height:24px;background:#2c2c2c;border-radius:1px"></div>
<svg style="left:1494px;top:485px" width="14" height="14" viewBox="0 0 14 14"><path d="M5.500.700H.700v12.600h12.600V8.500" stroke="#c8c8c8" stroke-width="1.300" fill="none"/><path d="M5 9L13 1M8 .700h5.300V6M5 5.500V9h3.500" stroke="#c8c8c8" stroke-width="1.300" fill="none"/></svg>
<svg style="left:866px;top:485px" width="26" height="14" viewBox="0 0 26 14"><path d="M2.200 12A6.300 6.300 0 1 1 12.800 12" stroke="#c0c0c0" stroke-width="1.300" fill="none"/><path d="M7.500 8l3-4" stroke="#c0c0c0" stroke-width="1.300"/><circle cx="7.500" cy="8.300" r="1.200" fill="#c0c0c0"/><path d="M19 3.500l3 3 3-3" stroke="#c0c0c0" stroke-width="1.500" fill="none"/></svg>
<svg style="left:772px;top:483px" width="17" height="8" viewBox="0 0 17 8"><path d="M.6 8V1.600h15.800V8" stroke="#c0c0c0" stroke-width="1.200" fill="none" stroke-dasharray="3 1.200 9 1.200 20"/></svg>
<svg style="left:820px;top:482px" width="12" height="8" viewBox="0 0 12 8"><path d="M3 0v5M.5 2.500h5M9 4v3M7.500 5.500h3" stroke="#c0c0c0" stroke-width="1"/></svg>
<svg style="left:682px;top:48px" width="70" height="12" viewBox="0 0 70 12"><path d="M0 2h13M0 6h13M0 10h13" stroke="#8c8c8c" stroke-width="1.200"/><rect x="27" y="1" width="11" height="8" rx="1" fill="none" stroke="#8c8c8c" stroke-width="1.200"/><path d="M30 11h5" stroke="#8c8c8c" stroke-width="1.200"/><circle cx="62" cy="5" r="3.500" fill="none" stroke="#8c8c8c" stroke-width="1.200"/><path d="M64.500 7.500l3.500 3.500" stroke="#8c8c8c" stroke-width="1.300"/></svg>
<div class="abs" style="left:1516px;top:39px;width:1px;height:468px;background:#0b0b0b"></div>
<div class="abs" style="left:1517px;top:69px;width:403px;height:438px;background:#1e1e1e"></div>
<div class="t" style="left:1620px;top:261px;font-size:24px;letter-spacing:.3px;color:#4e4e4e;width:194.4px;text-align-last:justify">没有可检查的对象</div>
<svg width="1" height="1" style="left:0;top:0;opacity:.01"><defs>
<linearGradient id="sky" x1="0" y1="0" x2="1" y2="1"><stop offset="0" stop-color="#6a87ad"/><stop offset=".5" stop-color="#708cb1"/><stop offset="1" stop-color="#5c7aa2"/></linearGradient>
<linearGradient id="lm" x1="0" y1="0" x2="0" y2="1"><stop offset="0" stop-color="#41618e"/><stop offset="1" stop-color="#324f74"/></linearGradient>
<linearGradient id="rg" x1="0" y1="0" x2="0" y2="1"><stop offset="0" stop-color="#21364b"/><stop offset=".3" stop-color="#273f42"/><stop offset=".6" stop-color="#35523a"/><stop offset="1" stop-color="#4a6741"/></linearGradient>
<linearGradient id="blr" x1="0" y1="0" x2="0" y2="1"><stop offset="0" stop-color="#56749e"/><stop offset=".3" stop-color="#46668f"/><stop offset=".58" stop-color="#2a415f"/><stop offset=".75" stop-color="#3d5360"/><stop offset="1" stop-color="#4c5e5b"/></linearGradient>
<g id="mtn"><rect x="-3" y="-3" width="102" height="60" fill="url(#sky)"/><path d="M30 -3L99 -3V34H62L54 23z" fill="#6582aa"/><path d="M54 23l14-20" stroke="#6f8bb1" stroke-width="3" fill="none"/><path d="M54 23l-16-20" stroke="#6482ab" stroke-width="3" fill="none"/><path d="M-3 -3H12L52 27 -3 44z" fill="url(#lm)"/><path d="M-3 20L12 33 -3 42z" fill="#4c7066"/><path d="M17 -3l4 5 5-5zM53 -3l2 6 4-6z" fill="#dfe7f0"/><path d="M-3 40C14 33 34 27 54 24S84 20 99 17V57H-3z" fill="url(#rg)"/></g>
<g id="mbw"><rect x="-3" y="-3" width="102" height="60" fill="#dcdcdc"/><path d="M-3 -3H42L64 28 30 40H-3z" fill="#8d8d8d"/><path d="M6 -3l24 23 16 10" stroke="#a2a2a2" stroke-width="3" fill="none"/><path d="M99 -3H74L60 20 50 32H99z" fill="#8b8b8b"/><path d="M42 -1l8 12 4-7 6 11" stroke="#f2f2f2" stroke-width="2" fill="none"/><path d="M36 34C46 25 66 19 82 22L99 28V40H36z" fill="#6b6b6b"/><path d="M-3 33C20 31 40 34 60 36L99 33V48H-3z" fill="#2f2f2f"/><path d="M-3 46C30 44 60 46 99 44V57H-3z" fill="#bdbdbd"/><path d="M0 51h30l10-3h30l26 2" stroke="#eee" stroke-width="1.500" fill="none"/></g>
<g id="msn"><rect x="-3" y="-3" width="102" height="60" fill="#8fa9cc"/><path d="M-3 -3H99V8L70 12 40 4 14 6-3 12z" fill="#eef1f5"/><path d="M-3 8L30 3 58 14 72 24 50 38H-3z" fill="#7f9bc4"/><path d="M0 18l16-8 20 8 18 10M6 26l20-4 18 8" stroke="#d3deec" stroke-width="3" stroke-dasharray="2 1.500" fill="none"/><path d="M8 14l20 0 16 10M0 30l30 0" stroke="#4f6f9f" stroke-width="2.500" stroke-dasharray="1.500 2" fill="none"/><path d="M70 20L86 4 99 2V26z" fill="#3f5f92"/><path d="M40 36C54 28 80 22 99 20V44H40z" fill="#2a4536"/><path d="M-3 36C10 34 40 36 60 38L99 38V48H-3z" fill="#263c2a"/><path d="M-3 42C30 40 60 43 99 39V57H-3z" fill="#8a9a2c"/><path d="M60 44C76 42 88 40 99 38V57H60z" fill="#c2a226"/><path d="M-3 50C30 49 60 51 99 50V57H-3z" fill="#4d8a2e"/></g>
</defs></svg>
<div class="abs" style="left:0;top:508px;width:1920px;height:31px;background:#2b2b2b"></div>
<div class="abs" style="left:0;top:539px;width:1920px;height:1px;background:#3a3a96"></div>
<div class="t" style="left:33px;top:516px;font-size:13px;color:#c4c4c4;width:26.0px;text-align-last:justify">索引</div>
<div class="abs" style="left:93px;top:508px;width:1px;height:31px;background:#1c1c1c"></div>
<svg style="left:106px;top:513px" width="18" height="19" viewBox="0 0 18 19"><rect x="3.600" y=".6" width="10" height="7.500" fill="none" stroke="#5e5e5e" stroke-width="1.200"/><path d="M3.600 8v4" stroke="#5e5e5e" stroke-width="1.200"/><rect x="0" y="12" width="17" height="6.500" rx="1" fill="#4a4a4a"/></svg>
<svg style="left:136px;top:513px" width="18" height="19" viewBox="0 0 18 19"><rect x="3.600" y=".6" width="10" height="7.500" fill="none" stroke="#5e5e5e" stroke-width="1.200"/><rect x="0" y="12" width="4" height="6.500" fill="#4a4a4a"/><rect x="13" y="12" width="4" height="6.500" fill="#4a4a4a"/><path d="M8.600 9v8M5.500 14l3.100 3 3.100-3" stroke="#5e5e5e" stroke-width="1.200" fill="none"/></svg>
<svg style="left:166px;top:513px" width="18" height="19" viewBox="0 0 18 19"><rect x="3.600" y=".6" width="10" height="7.500" fill="none" stroke="#5e5e5e" stroke-width="1.200"/><rect x="0" y="12" width="9" height="6.500" fill="#4a4a4a"/><path d="M13.500 9v8M10.500 14l3 3 3-3" stroke="#5e5e5e" stroke-width="1.200" fill="none"/></svg>
<svg style="left:196px;top:513px" width="18" height="19" viewBox="0 0 18 19"><rect x="3.600" y=".6" width="10" height="7.500" fill="none" stroke="#5e5e5e" stroke-width="1.200"/><rect x="0" y="12" width="2.500" height="6.500" fill="#4a4a4a"/><rect x="4" y="11" width="9" height="7.500" fill="#5a5a5a"/><rect x="14.500" y="12" width="2.500" height="6.500" fill="#4a4a4a"/></svg>
<svg style="left:217px;top:520px" width="9" height="6" viewBox="0 0 9 6"><path d="M1 1l3.500 3.500L8 1" stroke="#c8c8c8" stroke-width="1.500" fill="none"/></svg>
<svg style="left:254px;top:514px" width="11" height="17" viewBox="0 0 11 17"><path d="M0 0v13l3.200-2.800L5.800 16l2.400-1L5.600 9.500H10z" fill="#a8a8a8"/></svg>
<svg style="left:271px;top:520px" width="9" height="6" viewBox="0 0 9 6"><path d="M1 1l3.500 3.500L8 1" stroke="#c8c8c8" stroke-width="1.500" fill="none"/></svg>
<div class="t" style="left:885px;top:516px;font-size:12.500px;color:#b8b8b8">shutterstock</div>
<div class="t" style="left:978px;top:516px;font-size:12.500px;color:#b8b8b8">02:22:21</div>
<svg style="left:1131px;top:517px" width="7" height="10" viewBox="0 0 7 10"><path d="M1 1l4.500 4L1 9" stroke="#444" stroke-width="1.300" fill="none"/></svg>
<svg style="left:1709px;top:515px" width="18" height="15" viewBox="0 0 18 15"><rect x="0" y="4.500" width="7" height="6" rx="1" fill="#5b5bf0"/><rect x="10.500" y="4.500" width="7" height="6" rx="1" fill="#5b5bf0"/><path d="M8.700 0v15" stroke="#5b5bf0" stroke-width="1.300"/></svg>
<svg style="left:1736px;top:515px" width="18" height="15" viewBox="0 0 18 15"><path d="M1 10v3M3.500 8v5M6 9v4M8.700 0v15M11.500 6v7M14 9v4M16.500 10v3" stroke="#5b5bf0" stroke-width="1.300"/></svg>
<svg style="left:1763px;top:516px" width="15" height="14" viewBox="0 0 15 14"><path d="M1.500 10V7a6 6 0 0 1 12 0v3" stroke="#c8c8c8" stroke-width="1.300" fill="none"/><rect x="1" y="8.500" width="3" height="5" rx="1" fill="#c8c8c8"/><rect x="11" y="8.500" width="3" height="5" rx="1" fill="#c8c8c8"/></svg>
<svg style="left:1789px;top:515px" width="19" height="15" viewBox="0 0 19 15"><rect x="0" y="4.500" width="7.500" height="6" rx="1" fill="#c8c8c8"/><rect x="11" y="4.500" width="7.500" height="6" rx="1" fill="#c8c8c8"/><path d="M9.200 0v2.500M9.200 12.500V15M6 1l1 1.600M12.500 1l-1 1.600M6 14l1-1.600M12.500 14l-1-1.600" stroke="#c8c8c8" stroke-width="1"/></svg>
<svg style="left:1826px;top:515px" width="14" height="14" viewBox="0 0 14 14"><rect x=".7" y=".7" width="12.600" height="10.600" rx="1" fill="none" stroke="#c8c8c8" stroke-width="1.300"/><path d="M3.500 1v10M10.500 1v10M1 4.500h2.500M1 7.500h2.500M10.500 4.500H13M10.500 7.500H13" stroke="#c8c8c8" stroke-width="1"/><path d="M5 11.500h4L7 14z" fill="#c8c8c8"/></svg>
<div class="abs" style="left:1855px;top:508px;width:1px;height:31px;background:#1c1c1c"></div>
<svg style="left:1869px;top:515px" width="16" height="14" viewBox="0 0 16 14"><rect x="3.500" y=".7" width="11.800" height="8" rx="1.500" fill="#5b5bf0"/><rect x=".7" y="5" width="11.800" height="8" rx="1.500" fill="#2b2b2b" stroke="#5b5bf0" stroke-width="1.400"/></svg>
<svg style="left:1898px;top:516px" width="12" height="12" viewBox="0 0 12 12"><path d="M.7.7v10.600L11.300.7v10.600z" stroke="#c8c8c8" stroke-width="1.200" fill="none" stroke-linejoin="round"/></svg>
<div class="abs" style="left:0;top:540px;width:1520px;height:435px;background:#1c1c1c"></div>
<div class="abs" style="left:0;top:555px;width:43px;height:435px;background:#1f1f1f"></div>
<div class="abs" style="left:43px;top:715px;width:1477px;height:85px;background:#222222"></div>
<svg style="left:0;top:540px" width="1520" height="22" viewBox="0 0 1520 22"><path d="M43.0 4v12" stroke="#b4b4b4" stroke-width="1.200"/><path d="M51.7 5v11" stroke="#363636" stroke-width="1"/><path d="M60.4 5v11" stroke="#363636" stroke-width="1"/><path d="M69.1 5v11" stroke="#363636" stroke-width="1"/><path d="M77.8 5v11" stroke="#363636" stroke-width="1"/><path d="M86.4 5v11" stroke="#363636" stroke-width="1"/><path d="M95.1 5v11" stroke="#363636" stroke-width="1"/><path d="M103.8 5v11" stroke="#363636" stroke-width="1"/><path d="M112.5 5v11" stroke="#363636" stroke-width="1"/><path d="M121.2 5v11" stroke="#363636" stroke-width="1"/><path d="M129.9 5v11" stroke="#363636" stroke-width="1"/><path d="M138.6 5v11" stroke="#363636" stroke-width="1"/><path d="M147.3 5v11" stroke="#363636" stroke-width="1"/><path d="M156.0 5v11" stroke="#363636" stroke-width="1"/><path d="M164.7 5v11" stroke="#363636" stroke-width="1"/><path d="M173.3 4v12" stroke="#b4b4b4" stroke-width="1.200"/><path d="M182.0 5v11" stroke="#363636" stroke-width="1"/><path d="M190.7 5v11" stroke="#363636" stroke-width="1"/><path d="M199.4 5v11" stroke="#363636" stroke-width="1"/><path d="M208.1 5v11" stroke="#363636" stroke-width="1"/><path d="M216.8 5v11" stroke="#363636" stroke-width="1"/><path d="M225.5 5v11" stroke="#363636" stroke-width="1"/><path d="M234.2 5v11" stroke="#363636" stroke-width="1"/><path d="M242.9 5v11" stroke="#363636" stroke-width="1"/><path d="M251.6 5v11" stroke="#363636" stroke-width="1"/><path d="M260.2 5v11" stroke="#363636" stroke-width="1"/><path d="M268.9 5v11" stroke="#363636" stroke-width="1"/><path d="M277.6 5v11" stroke="#363636" stroke-width="1"/><path d="M286.3 5v11" stroke="#363636" stroke-width="1"/><path d="M295.0 5v11" stroke="#363636" stroke-width="1"/><path d="M303.7 4v12" stroke="#b4b4b4" stroke-width="1.200"/><path d="M312.4 5v11" stroke="#363636" stroke-width="1"/><path d="M321.1 5v11" stroke="#363636" stroke-width="1"/><path d="M329.8 5v11" stroke="#363636" stroke-width="1"/><path d="M338.5 5v11" stroke="#363636" stroke-width="1"/><path d="M347.1 5v11" stroke="#363636" stroke-width="1"/><path d="M355.8 5v11" stroke="#363636" stroke-width="1"/><path d="M364.5 5v11" stroke="#363636" stroke-width="1"/><path d="M373.2 5v11" stroke="#363636" stroke-width="1"/><path d="M381.9 5v11" stroke="#363636" stroke-width="1"/><path d="M390.6 5v11" stroke="#363636" stroke-width="1"/><path d="M399.3 5v11" stroke="#363636" stroke-width="1"/><path d="M408.0 5v11" stroke="#363636" stroke-width="1"/><path d="M416.7 5v11" stroke="#363636" stroke-width="1"/><path d="M425.4 5v11" stroke="#363636" stroke-width="1"/><path d="M434.0 4v12" stroke="#b4b4b4" stroke-width="1.200"/><path d="M442.7 5v11" stroke="#363636" stroke-width="1"/><path d="M451.4 5v11" stroke="#363636" stroke-width="1"/><path d="M460.1 5v11" stroke="#363636" stroke-width="1"/><path d="M468.8 5v11" stroke="#363636" stroke-width="1"/><path d="M477.5 5v11" stroke="#363636" stroke-width="1"/><path d="M486.2 5v11" stroke="#363636" stroke-width="1"/><path d="M494.9 5v11" stroke="#363636" stroke-width="1"/><path d="M503.6 5v11" stroke="#363636" stroke-width="1"/><path d="M512.3 5v11" stroke="#363636" stroke-width="1"/><path d="M520.9 5v11" stroke="#363636" stroke-width="1"/><path d="M529.6 5v11" stroke="#363636" stroke-width="1"/><path d="M538.3 5v11" stroke="#363636" stroke-width="1"/><path d="M547.0 5v11" stroke="#363636" stroke-width="1"/><path d="M555.7 5v11" stroke="#363636" stroke-width="1"/><path d="M564.4 4v12" stroke="#b4b4b4" stroke-width="1.200"/><path d="M573.1 5v11" stroke="#363636" stroke-width="1"/><path d="M581.8 5v11" stroke="#363636" stroke-width="1"/><path d="M590.5 5v11" stroke="#363636" stroke-width="1"/><path d="M599.2 5v11" stroke="#363636" stroke-width="1"/><path d="M607.9 5v11" stroke="#363636" stroke-width="1"/><path d="M616.5 5v11" stroke="#363636" stroke-width="1"/><path d="M625.2 5v11" stroke="#363636" stroke-width="1"/><path d="M633.9 5v11" stroke="#363636" stroke-width="1"/><path d="M642.6 5v11" stroke="#363636" stroke-width="1"/><path d="M651.3 5v11" stroke="#363636" stroke-width="1"/><path d="M660.0 5v11" stroke="#363636" stroke-width="1"/><path d="M668.7 5v11" stroke="#363636" stroke-width="1"/><path d="M677.4 5v11" stroke="#363636" stroke-width="1"/><path d="M686.1 5v11" stroke="#363636" stroke-width="1"/><path d="M694.8 4v12" stroke="#b4b4b4" stroke-width="1.200"/><path d="M703.4 5v11" stroke="#363636" stroke-width="1"/><path d="M712.1 5v11" stroke="#363636" stroke-width="1"/><path d="M720.8 5v11" stroke="#363636" stroke-width="1"/><path d="M729.5 5v11" stroke="#363636" stroke-width="1"/><path d="M738.2 5v11" stroke="#363636" stroke-width="1"/><path d="M746.9 5v11" stroke="#363636" stroke-width="1"/><path d="M755.6 5v11" stroke="#363636" stroke-width="1"/><path d="M764.3 5v11" stroke="#363636" stroke-width="1"/><path d="M773.0 5v11" stroke="#363636" stroke-width="1"/><path d="M781.7 5v11" stroke="#363636" stroke-width="1"/><path d="M790.3 5v11" stroke="#363636" stroke-width="1"/><path d="M799.0 5v11" stroke="#363636" stroke-width="1"/><path d="M807.7 5v11" stroke="#363636" stroke-width="1"/><path d="M816.4 5v11" stroke="#363636" stroke-width="1"/><path d="M825.1 4v12" stroke="#b4b4b4" stroke-width="1.200"/><path d="M833.8 5v11" stroke="#363636" stroke-width="1"/><path d="M842.5 5v11" stroke="#363636" stroke-width="1"/><path d="M851.2 5v11" stroke="#363636" stroke-width="1"/><path d="M859.9 5v11" stroke="#363636" stroke-width="1"/><path d="M868.6 5v11" stroke="#363636" stroke-width="1"/><path d="M877.2 5v11" stroke="#363636" stroke-width="1"/><path d="M885.9 5v11" stroke="#363636" stroke-width="1"/><path d="M894.6 5v11" stroke="#363636" stroke-width="1"/><path d="M903.3 5v11" stroke="#363636" stroke-width="1"/><path d="M912.0 5v11" stroke="#363636" stroke-width="1"/><path d="M920.7 5v11" stroke="#363636" stroke-width="1"/><path d="M929.4 5v11" stroke="#363636" stroke-width="1"/><path d="M938.1 5v11" stroke="#363636" stroke-width="1"/><path d="M946.8 5v11" stroke="#363636" stroke-width="1"/><path d="M955.5 4v12" stroke="#b4b4b4" stroke-width="1.200"/><path d="M964.1 5v11" stroke="#363636" stroke-width="1"/><path d="M972.8 5v11" stroke="#363636" stroke-width="1"/><path d="M981.5 5v11" stroke="#363636" stroke-width="1"/><path d="M990.2 5v11" stroke="#363636" stroke-width="1"/><path d="M998.9 5v11" stroke="#363636" stroke-width="1"/><path d="M1007.6 5v11" stroke="#363636" stroke-width="1"/><path d="M1016.3 5v11" stroke="#363636" stroke-width="1"/><path d="M1025.0 5v11" stroke="#363636" stroke-width="1"/><path d="M1033.7 5v11" stroke="#363636" stroke-width="1"/><path d="M1042.4 5v11" stroke="#363636" stroke-width="1"/><path d="M1051.0 5v11" stroke="#363636" stroke-width="1"/><path d="M1059.7 5v11" stroke="#363636" stroke-width="1"/><path d="M1068.4 5v11" stroke="#363636" stroke-width="1"/><path d="M1077.1 5v11" stroke="#363636" stroke-width="1"/><path d="M1085.8 4v12" stroke="#b4b4b4" stroke-width="1.200"/><path d="M1094.5 5v11" stroke="#363636" stroke-width="1"/><path d="M1103.2 5v11" stroke="#363636" stroke-width="1"/><path d="M1111.9 5v11" stroke="#363636" stroke-width="1"/><path d="M1120.6 5v11" stroke="#363636" stroke-width="1"/><path d="M1129.3 5v11" stroke="#363636" stroke-width="1"/><path d="M1137.9 5v11" stroke="#363636" stroke-width="1"/><path d="M1146.6 5v11" stroke="#363636" stroke-width="1"/><path d="M1155.3 5v11" stroke="#363636" stroke-width="1"/><path d="M1164.0 5v11" stroke="#363636" stroke-width="1"/><path d="M1172.7 5v11" stroke="#363636" stroke-width="1"/><path d="M1181.4 5v11" stroke="#363636" stroke-width="1"/><path d="M1190.1 5v11" stroke="#363636" stroke-width="1"/><path d="M1198.8 5v11" stroke="#363636" stroke-width="1"/><path d="M1207.5 5v11" stroke="#363636" stroke-width="1"/><path d="M1216.2 4v12" stroke="#b4b4b4" stroke-width="1.200"/><path d="M1224.8 5v11" stroke="#363636" stroke-width="1"/><path d="M1233.5 5v11" stroke="#363636" stroke-width="1"/><path d="M1242.2 5v11" stroke="#363636" stroke-width="1"/><path d="M1250.9 5v11" stroke="#363636" stroke-width="1"/><path d="M1259.6 5v11" stroke="#363636" stroke-width="1"/><path d="M1268.3 5v11" stroke="#363636" stroke-width="1"/><path d="M1277.0 5v11" stroke="#363636" stroke-width="1"/><path d="M1285.7 5v11" stroke="#363636" stroke-width="1"/><path d="M1294.4 5v11" stroke="#363636" stroke-width="1"/><path d="M1303.1 5v11" stroke="#363636" stroke-width="1"/><path d="M1311.7 5v11" stroke="#363636" stroke-width="1"/><path d="M1320.4 5v11" stroke="#363636" stroke-width="1"/><path d="M1329.1 5v11" stroke="#363636" stroke-width="1"/><path d="M1337.8 5v11" stroke="#363636" stroke-width="1"/><path d="M1346.5 4v12" stroke="#b4b4b4" stroke-width="1.200"/><path d="M1355.2 5v11" stroke="#363636" stroke-width="1"/><path d="M1363.9 5v11" stroke="#363636" stroke-width="1"/><path d="M1372.6 5v11" stroke="#363636" stroke-width="1"/><path d="M1381.3 5v11" stroke="#363636" stroke-width="1"/><path d="M1390.0 5v11" stroke="#363636" stroke-width="1"/><path d="M1398.6 5v11" stroke="#363636" stroke-width="1"/><path d="M1407.3 5v11" stroke="#363636" stroke-width="1"/><path d="M1416.0 5v11" stroke="#363636" stroke-width="1"/><path d="M1424.7 5v11" stroke="#363636" stroke-width="1"/><path d="M1433.4 5v11" stroke="#363636" stroke-width="1"/><path d="M1442.1 5v11" stroke="#363636" stroke-width="1"/><path d="M1450.8 5v11" stroke="#363636" stroke-width="1"/><path d="M1459.5 5v11" stroke="#363636" stroke-width="1"/><path d="M1468.2 5v11" stroke="#363636" stroke-width="1"/><path d="M1476.9 4v12" stroke="#b4b4b4" stroke-width="1.200"/><path d="M1485.5 5v11" stroke="#363636" stroke-width="1"/><path d="M1494.2 5v11" stroke="#363636" stroke-width="1"/><path d="M1502.9 5v11" stroke="#363636" stroke-width="1"/><path d="M1511.6 5v11" stroke="#363636" stroke-width="1"/><path d="M0 5h3v7l-2 2.500" stroke="#8a8a8a" stroke-width="1" fill="none"/></svg>
<div class="t" style="left:53px;top:545px;font-size:11px;color:#6c6c6c;letter-spacing:.75px">00:00:00:00</div>
<div class="t" style="left:183px;top:545px;font-size:11px;color:#6c6c6c;letter-spacing:.75px">00:00:15:00</div>
<div class="t" style="left:313px;top:545px;font-size:11px;color:#6c6c6c;letter-spacing:.75px">00:00:30:00</div>
<div class="t" style="left:444px;top:545px;font-size:11px;color:#6c6c6c;letter-spacing:.75px">00:00:45:00</div>
<div class="t" style="left:574px;top:545px;font-size:11px;color:#6c6c6c;letter-spacing:.75px">00:01:00:00</div>
<div class="t" style="left:704px;top:545px;font-size:11px;color:#6c6c6c;letter-spacing:.75px">00:01:15:00</div>
<div class="t" style="left:835px;top:545px;font-size:11px;color:#6c6c6c;letter-spacing:.75px">00:01:30:00</div>
<div class="t" style="left:965px;top:545px;font-size:11px;color:#6c6c6c;letter-spacing:.75px">00:01:45:00</div>
<div class="t" style="left:1095px;top:545px;font-size:11px;color:#6c6c6c;letter-spacing:.75px">00:02:00:00</div>
<div class="t" style="left:1226px;top:545px;font-size:11px;color:#6c6c6c;letter-spacing:.75px">00:02:15:00</div>
<div class="t" style="left:1356px;top:545px;font-size:11px;color:#6c6c6c;letter-spacing:.75px">00:02:30:00</div>
<div class="t" style="left:1486px;top:545px;font-size:11px;color:#6c6c6c;letter-spacing:.75px">00:02</div>
<div class="abs" style="left:43px;top:720px;width:77px;height:75px;background:#1d2f4c;border-radius:4px;overflow:hidden"><div class="t" style="left:3px;top:2px;font-size:11px;color:#9fbaec;letter-spacing:.2px">2803486-hd...</div><div class="abs" style="left:2px;top:15px;width:73px;height:40px;background:#882413"></div></div>
<svg style="left:71.8px;top:748.1px" width="13.4" height="13.8" viewBox="0 0 107 138" preserveAspectRatio="none"><path d="M30 68V14c0-6 4-10 10-10h30c4 0 6 1 8 4l20 26c2 3 3 5 3 9v80c0 6-4 10-10 10H60" fill="none" stroke="#fff" stroke-width="9" stroke-linejoin="round"/><path d="M68 4v22c0 8 5 13 13 13h20" fill="#fff" stroke="#fff" stroke-width="5"/><path d="M28 68c1.500-2.500 4.500-2.500 6 0l21 62c1.500 4-.5 7-4.500 7H6c-4 0-6-3-4.500-7z" fill="#ffd02f"/><path d="M28.500 88h5l-1 28h-3z" fill="#882413"/><circle cx="31" cy="124" r="3.300" fill="#882413"/></svg>
<div class="abs" style="left:75px;top:766px;width:10px;height:2px;background:#c9a79c;opacity:.8"></div>
<div class="abs" style="left:121px;top:720px;width:55px;height:75px;background:#1d2f4c;border-radius:4px;overflow:hidden"><div class="t" style="left:3px;top:2px;font-size:11px;color:#9fbaec;letter-spacing:.2px">280780...</div><div class="abs" style="left:2px;top:15px;width:51px;height:40px;background:#882413"></div></div>
<svg style="left:127.8px;top:748.1px" width="13.4" height="13.8" viewBox="0 0 107 138" preserveAspectRatio="none"><path d="M30 68V14c0-6 4-10 10-10h30c4 0 6 1 8 4l20 26c2 3 3 5 3 9v80c0 6-4 10-10 10H60" fill="none" stroke="#fff" stroke-width="9" stroke-linejoin="round"/><path d="M68 4v22c0 8 5 13 13 13h20" fill="#fff" stroke="#fff" stroke-width="5"/><path d="M28 68c1.500-2.500 4.500-2.500 6 0l21 62c1.500 4-.5 7-4.500 7H6c-4 0-6-3-4.500-7z" fill="#ffd02f"/><path d="M28.500 88h5l-1 28h-3z" fill="#882413"/><circle cx="31" cy="124" r="3.300" fill="#882413"/></svg>
<div class="abs" style="left:131px;top:766px;width:10px;height:2px;background:#c9a79c;opacity:.8"></div>
<div class="abs" style="left:177px;top:720px;width:70px;height:75px;background:#1d2f4c;border-radius:4px;overflow:hidden"><div class="t" style="left:3px;top:2px;font-size:11px;color:#9fbaec;letter-spacing:.2px">2518835-h...</div><div class="abs" style="left:2px;top:15px;width:66px;height:40px;background:#882413"></div></div>
<svg style="left:205.8px;top:748.1px" width="13.4" height="13.8" viewBox="0 0 107 138" preserveAspectRatio="none"><path d="M30 68V14c0-6 4-10 10-10h30c4 0 6 1 8 4l20 26c2 3 3 5 3 9v80c0 6-4 10-10 10H60" fill="none" stroke="#fff" stroke-width="9" stroke-linejoin="round"/><path d="M68 4v22c0 8 5 13 13 13h20" fill="#fff" stroke="#fff" stroke-width="5"/><path d="M28 68c1.500-2.500 4.500-2.500 6 0l21 62c1.500 4-.5 7-4.500 7H6c-4 0-6-3-4.500-7z" fill="#ffd02f"/><path d="M28.500 88h5l-1 28h-3z" fill="#882413"/><circle cx="31" cy="124" r="3.300" fill="#882413"/></svg>
<div class="abs" style="left:209px;top:766px;width:10px;height:2px;background:#c9a79c;opacity:.8"></div>
<div class="abs" style="left:248px;top:720px;width:100px;height:75px;background:#1d2f4c;border-radius:4px;overflow:hidden"><div class="t" style="left:3px;top:2px;font-size:11px;color:#9fbaec;letter-spacing:.2px">2807716-hd-free</div><div class="abs" style="left:2px;top:15px;width:96px;height:40px;background:#882413"></div></div>
<svg style="left:276.8px;top:748.1px" width="13.4" height="13.8" viewBox="0 0 107 138" preserveAspectRatio="none"><path d="M30 68V14c0-6 4-10 10-10h30c4 0 6 1 8 4l20 26c2 3 3 5 3 9v80c0 6-4 10-10 10H60" fill="none" stroke="#fff" stroke-width="9" stroke-linejoin="round"/><path d="M68 4v22c0 8 5 13 13 13h20" fill="#fff" stroke="#fff" stroke-width="5"/><path d="M28 68c1.500-2.500 4.500-2.500 6 0l21 62c1.500 4-.5 7-4.500 7H6c-4 0-6-3-4.500-7z" fill="#ffd02f"/><path d="M28.500 88h5l-1 28h-3z" fill="#882413"/><circle cx="31" cy="124" r="3.300" fill="#882413"/></svg>
<div class="abs" style="left:280px;top:766px;width:10px;height:2px;background:#c9a79c;opacity:.8"></div>
<div class="abs" style="left:350px;top:720px;width:118px;height:75px;background:#1d2f4c;border-radius:4px;overflow:hidden"><div class="t" style="left:3px;top:2px;font-size:11px;color:#9fbaec;letter-spacing:.2px">e</div><div class="abs" style="left:2px;top:15px;width:114px;height:40px;background:#882413"></div></div>
<svg style="left:378.8px;top:748.1px" width="13.4" height="13.8" viewBox="0 0 107 138" preserveAspectRatio="none"><path d="M30 68V14c0-6 4-10 10-10h30c4 0 6 1 8 4l20 26c2 3 3 5 3 9v80c0 6-4 10-10 10H60" fill="none" stroke="#fff" stroke-width="9" stroke-linejoin="round"/><path d="M68 4v22c0 8 5 13 13 13h20" fill="#fff" stroke="#fff" stroke-width="5"/><path d="M28 68c1.500-2.500 4.500-2.500 6 0l21 62c1.500 4-.5 7-4.500 7H6c-4 0-6-3-4.500-7z" fill="#ffd02f"/><path d="M28.500 88h5l-1 28h-3z" fill="#882413"/><circle cx="31" cy="124" r="3.300" fill="#882413"/></svg>
<div class="abs" style="left:382px;top:766px;width:10px;height:2px;background:#c9a79c;opacity:.8"></div>
<div class="abs" style="left:471px;top:720px;width:128px;height:75px;background:#1d2f4c;border-radius:4px;overflow:hidden"><div class="t" style="left:3px;top:2px;font-size:11px;color:#9fbaec;letter-spacing:.2px">493768-hd-free</div><div class="abs" style="left:2px;top:15px;width:124px;height:40px;background:#882413"></div></div>
<svg style="left:499.8px;top:748.1px" width="13.4" height="13.8" viewBox="0 0 107 138" preserveAspectRatio="none"><path d="M30 68V14c0-6 4-10 10-10h30c4 0 6 1 8 4l20 26c2 3 3 5 3 9v80c0 6-4 10-10 10H60" fill="none" stroke="#fff" stroke-width="9" stroke-linejoin="round"/><path d="M68 4v22c0 8 5 13 13 13h20" fill="#fff" stroke="#fff" stroke-width="5"/><path d="M28 68c1.500-2.500 4.500-2.500 6 0l21 62c1.500 4-.5 7-4.500 7H6c-4 0-6-3-4.500-7z" fill="#ffd02f"/><path d="M28.500 88h5l-1 28h-3z" fill="#882413"/><circle cx="31" cy="124" r="3.300" fill="#882413"/></svg>
<div class="abs" style="left:503px;top:766px;width:10px;height:2px;background:#c9a79c;opacity:.8"></div>
<div class="abs" style="left:601px;top:720px;width:86px;height:75px;background:#1d2f4c;border-radius:4px;overflow:hidden"><div class="t" style="left:3px;top:2px;font-size:11px;color:#9fbaec;letter-spacing:.2px">2518328-hd-fr...</div><div class="abs" style="left:2px;top:15px;width:82px;height:40px;background:#882413"></div></div>
<svg style="left:629.8px;top:748.1px" width="13.4" height="13.8" viewBox="0 0 107 138" preserveAspectRatio="none"><path d="M30 68V14c0-6 4-10 10-10h30c4 0 6 1 8 4l20 26c2 3 3 5 3 9v80c0 6-4 10-10 10H60" fill="none" stroke="#fff" stroke-width="9" stroke-linejoin="round"/><path d="M68 4v22c0 8 5 13 13 13h20" fill="#fff" stroke="#fff" stroke-width="5"/><path d="M28 68c1.500-2.500 4.500-2.500 6 0l21 62c1.500 4-.5 7-4.500 7H6c-4 0-6-3-4.500-7z" fill="#ffd02f"/><path d="M28.500 88h5l-1 28h-3z" fill="#882413"/><circle cx="31" cy="124" r="3.300" fill="#882413"/></svg>
<div class="abs" style="left:633px;top:766px;width:10px;height:2px;background:#c9a79c;opacity:.8"></div>
<div class="abs" style="left:690px;top:720px;width:23px;height:75px;background:#1d2f4c;border-radius:4px;overflow:hidden"><div class="t" style="left:3px;top:2px;font-size:11px;color:#9fbaec;letter-spacing:.2px">4...</div><div class="abs" style="left:2px;top:15px;width:19px;height:40px;background:#882413"></div></div>
<div class="abs" style="left:716px;top:720px;width:32px;height:75px;background:#1d2f4c;border-radius:4px;overflow:hidden"><div class="t" style="left:3px;top:2px;font-size:11px;color:#9fbaec;letter-spacing:.2px">281...</div><div class="abs" style="left:2px;top:15px;width:28px;height:40px;background:#882413"></div></div>
<div class="abs" style="left:751px;top:720px;width:32px;height:75px;background:#1d2f4c;border-radius:4px;overflow:hidden"><div class="t" style="left:3px;top:2px;font-size:11px;color:#9fbaec;letter-spacing:.2px">278...</div><div class="abs" style="left:2px;top:15px;width:28px;height:40px;background:#882413"></div></div>
<div class="abs" style="left:786px;top:720px;width:33px;height:75px;background:#1d2f4c;border-radius:4px;overflow:hidden"><div class="t" style="left:3px;top:2px;font-size:11px;color:#9fbaec;letter-spacing:.2px">287...</div><div class="abs" style="left:2px;top:15px;width:29px;height:40px;background:#882413"></div></div>
<div class="abs" style="left:821px;top:720px;width:32px;height:75px;background:#1d2f4c;border-radius:4px;overflow:hidden"><div class="t" style="left:3px;top:2px;font-size:11px;color:#9fbaec;letter-spacing:.2px">491...</div><div class="abs" style="left:2px;top:15px;width:28px;height:40px;background:#882413"></div></div>
<div class="abs" style="left:856px;top:720px;width:34px;height:75px;background:#1d2f4c;border-radius:4px;overflow:hidden"><div class="t" style="left:3px;top:2px;font-size:11px;color:#9fbaec;letter-spacing:.2px">161...</div><div class="abs" style="left:2px;top:15px;width:30px;height:40px;background:#882413"></div></div>
<div class="abs" style="left:167px;top:796px;width:3px;height:2px;background:#1fbf5a"></div>
<div class="abs" style="left:43px;top:805px;width:1242px;height:33px;border-radius:3px;overflow:hidden;background:#6a161c"><div class="abs" style="left:0;top:0;width:1242px;height:15px;background:#0f4d2a"></div><div class="abs" style="left:0;top:15px;width:1242px;height:18px;background:linear-gradient(#5c1218,#7b1b22)"></div><div class="abs" style="left:0;top:21px;width:1242px;height:1px;background:#a07a5e"></div><div class="t" style="left:3px;top:2px;font-size:11px;color:#86e3a2;letter-spacing:.2px">488645-clean_audio-free</div></div>
<div class="abs" style="left:1520px;top:540px;width:400px;height:435px;background:#1c1c1c"></div>
<div class="abs" style="left:1519px;top:540px;width:1px;height:435px;background:#0b0b0b"></div>
<div class="abs" style="left:1520px;top:540px;width:400px;height:21px;background:#2a2a2a"></div>
<div class="abs" style="left:1520px;top:561px;width:400px;height:1px;background:#0b0b0b"></div>
<div class="abs" style="left:1681px;top:540px;width:1px;height:404px;background:#0b0b0b"></div>
<div class="t" style="left:1524px;top:544px;font-size:13px;color:#c8c8c8;width:26.0px;text-align-last:justify">效果</div>
<div class="t" style="left:1812px;top:544px;font-size:13px;color:#d8d8d8;width:78.0px;text-align-last:justify">已安装的效果</div>
<svg style="left:1897px;top:545px" width="8" height="12" viewBox="0 0 8 12"><path d="M1 4.500l3-3 3 3M1 7.500l3 3 3-3" stroke="#c8c8c8" stroke-width="1.200" fill="none"/></svg>
<div class="abs" style="left:1520px;top:562px;width:161px;height:23px;background:#474747"></div>
<div class="t" style="left:1523px;top:568px;font-size:11px;color:#b0b0b0;width:77.0px;text-align-last:justify">所有视频和音频</div>
<div class="abs" style="left:1520px;top:587px;width:161px;height:21px;background:#2c2c2c"></div>
<div class="t" style="left:1522px;top:591px;font-size:11px;color:#c4c4c4;width:22.0px;text-align-last:justify">视频</div>
<div class="t" style="left:1523px;top:615px;font-size:11px;color:#c4c4c4;width:22.0px;text-align-last:justify">全部</div>
<div class="abs" style="left:1520px;top:632px;width:161px;height:24px;background:#1f1f1f"></div>
<div class="t" style="left:1523px;top:639px;font-size:11px;color:#c4c4c4">360°</div>
<div class="t" style="left:1523px;top:663px;font-size:11px;color:#c4c4c4;width:33.0px;text-align-last:justify">风格化</div>
<div class="abs" style="left:1520px;top:680px;width:161px;height:24px;background:#1f1f1f"></div>
<div class="t" style="left:1523px;top:687px;font-size:11px;color:#c4c4c4;width:22.0px;text-align-last:justify">光源</div>
<div class="t" style="left:1523px;top:711px;font-size:11px;color:#c4c4c4;width:22.0px;text-align-last:justify">怀旧</div>
<div class="abs" style="left:1520px;top:728px;width:161px;height:24px;background:#1f1f1f"></div>
<div class="t" style="left:1523px;top:735px;font-size:11px;color:#c4c4c4;width:22.0px;text-align-last:justify">基本</div>
<div class="t" style="left:1523px;top:759px;font-size:11px;color:#c4c4c4;width:22.0px;text-align-last:justify">抠像</div>
<div class="abs" style="left:1520px;top:776px;width:161px;height:24px;background:#1f1f1f"></div>
<div class="t" style="left:1523px;top:783px;font-size:11px;color:#c4c4c4;width:44.0px;text-align-last:justify">漫画效果</div>
<div class="t" style="left:1523px;top:807px;font-size:11px;color:#c4c4c4;width:22.0px;text-align-last:justify">模糊</div>
<div class="abs" style="left:1520px;top:824px;width:161px;height:24px;background:#1f1f1f"></div>
<div class="t" style="left:1523px;top:831px;font-size:11px;color:#c4c4c4;width:22.0px;text-align-last:justify">拼贴</div>
<div class="t" style="left:1523px;top:855px;font-size:11px;color:#c4c4c4;width:22.0px;text-align-last:justify">失真</div>
<div class="abs" style="left:1520px;top:872px;width:161px;height:24px;background:#1f1f1f"></div>
<div class="t" style="left:1523px;top:879px;font-size:11px;color:#c4c4c4;width:22.0px;text-align-last:justify">外观</div>
<div class="t" style="left:1523px;top:903px;font-size:11px;color:#c4c4c4;width:44.0px;text-align-last:justify">文本效果</div>
<div class="abs" style="left:1520px;top:920px;width:161px;height:24px;background:#1f1f1f"></div>
<div class="t" style="left:1523px;top:927px;font-size:11px;color:#c4c4c4;width:22.0px;text-align-last:justify">颜色</div>
<div class="t" style="left:1695px;top:580px;font-size:12px;color:#8e8e8e;width:48.0px;text-align-last:justify">视频效果</div>
<div class="abs" style="left:1695px;top:602px;width:96px;height:54px;border-radius:2px;background:linear-gradient(90deg,#c0252a 0%,#b9a43a 15%,#25a03c 36%,#169a8c 50%,#2a55a8 64%,#b0209a 84%,#b81434 100%)"></div>
<div class="abs" style="left:1804px;top:602px;width:96px;height:54px;overflow:hidden;border-radius:2px"><svg style="left:-3px;top:-3px;filter:blur(.8px)" width="102" height="60" viewBox="-3 -3 102 60"><use href="#mbw"/></svg></div>
<div class="abs" style="left:1695px;top:700px;width:96px;height:54px;overflow:hidden;border-radius:2px"><svg style="left:-3px;top:-3px;filter:blur(.8px)" width="102" height="60" viewBox="-3 -3 102 60"><use href="#mtn"/></svg></div>
<div class="abs" style="left:1804px;top:700px;width:96px;height:54px;overflow:hidden;border-radius:2px"><svg style="left:-3px;top:-3px;filter:blur(.8px)" width="102" height="60" viewBox="-3 -3 102 60"><use href="#mtn"/></svg></div>
<div class="abs" style="left:1695px;top:798px;width:96px;height:54px;overflow:hidden;border-radius:2px"><svg style="left:-3px;top:-3px;filter:blur(.8px)" width="102" height="60" viewBox="-3 -3 102 60"><rect x="-3" y="-3" width="102" height="60" fill="url(#blr)"/></svg></div>
<div class="abs" style="left:1804px;top:798px;width:96px;height:54px;overflow:hidden;border-radius:2px"><svg style="left:-3px;top:-3px;filter:blur(.8px)" width="102" height="60" viewBox="-3 -3 102 60"><use href="#mtn"/></svg></div>
<div class="abs" style="left:1695px;top:896px;width:96px;height:48px;overflow:hidden;border-radius:2px"><svg style="left:-3px;top:-3px;filter:blur(.8px)" width="102" height="60" viewBox="-3 -3 102 60"><use href="#mtn"/></svg></div>
<div class="abs" style="left:1804px;top:896px;width:96px;height:48px;overflow:hidden;border-radius:2px"><svg style="left:-3px;top:-3px;filter:blur(.8px)" width="102" height="60" viewBox="-3 -3 102 60"><use href="#msn"/></svg></div>
<div class="t" style="left:1695px;top:663px;font-size:11px;color:#c4c4c4;letter-spacing:.2px;width:33.6px;text-align-last:justify">颜色板</div>
<div class="t" style="left:1804px;top:663px;font-size:11px;color:#c4c4c4;letter-spacing:.2px">50 年代电视机</div>
<div class="t" style="left:1695px;top:761px;font-size:11px;color:#c4c4c4;letter-spacing:.2px">360° 反锐化遮罩</div>
<div class="t" style="left:1804px;top:761px;font-size:11px;color:#c4c4c4;letter-spacing:.2px">360° 泛光</div>
<div class="t" style="left:1695px;top:859px;font-size:11px;color:#c4c4c4;letter-spacing:.2px">360° 高斯模糊</div>
<div class="t" style="left:1804px;top:859px;font-size:11px;color:#c4c4c4;letter-spacing:.2px">360° 光环</div>
<div class="abs" style="left:1520px;top:944px;width:400px;height:31px;background:#1c1c1c"></div>
<div class="abs" style="left:1520px;top:944px;width:400px;height:1px;background:#0b0b0b"></div>
<div class="abs" style="left:1524px;top:951px;width:32px;height:18px;border-radius:3px;background:#565656"></div>
<svg style="left:1532px;top:954px" width="16" height="12" viewBox="0 0 16 12"><rect x=".6" y=".6" width="14.800" height="10.800" rx="1.500" fill="none" stroke="#d0d0d0" stroke-width="1.200"/><path d="M.6 3.500h14.800M4.500 3.500v8" stroke="#d0d0d0" stroke-width="1.200"/></svg>
<div class="abs" style="left:1565px;top:950px;width:304px;height:19px;border-radius:4px;background:#171717;border:1px solid #2c2c2c"></div>
<svg style="left:1571px;top:954px" width="11" height="11" viewBox="0 0 11 11"><circle cx="4.500" cy="4.500" r="3.700" fill="none" stroke="#a0a0a0" stroke-width="1.200"/><path d="M7.200 7.200l3.300 3.300" stroke="#a0a0a0" stroke-width="1.300"/></svg>
<div class="t" style="left:1588px;top:954px;font-size:11px;color:#555;width:22.0px;text-align-last:justify">搜索</div>
<div class="t" style="left:1879px;top:954px;font-size:11px;color:#9a9a9a">334 项</div>
</div><div id="winb"></div>
<div class="abs" style="left:216px;top:999px;width:1488px;height:90px;background:#c5c5c5;border-radius:5px 5px 0 0;border:1px solid #dcdcdc"></div>
<svg style="left:228px;top:1012px" width="53" height="50" viewBox="0 0 53 50"><defs><linearGradient id="fa" x1="0" y1="0" x2="0" y2="1"><stop offset="0" stop-color="#1fc3fb"/><stop offset="1" stop-color="#1a63e0"/></linearGradient><linearGradient id="fb" x1="0" y1="0" x2="0" y2="1"><stop offset="0" stop-color="#f4f6f8"/><stop offset="1" stop-color="#c9dbea"/></linearGradient></defs><rect width="53" height="50" rx="3" fill="url(#fb)"/><path d="M0 3a3 3 0 0 1 3-3h25c-5 9-7 18-7 28h7c0 8 1 15 3 22H3a3 3 0 0 1-3-3z" fill="url(#fa)"/><path d="M9 33c9 8 24 8 34 0" stroke="#111" stroke-width="1.800" fill="none" stroke-linecap="round"/><path d="M14 13v5M38 13v5" stroke="#111" stroke-width="1.800" stroke-linecap="round"/><path d="M28 0c-5 9-7 18-7 28h7c0 8 1 15 3 22" stroke="#111" stroke-width="1" fill="none"/></svg>
<div class="abs" style="left:294px;top:1009px;width:56px;height:56px;border-radius:50%;background:radial-gradient(circle at 50% 35%,#3ec0f8 0%,#1d86e8 60%,#1668d8 100%);border:3px solid #e4e4e6;box-shadow:0 1px 2px rgba(0,0,0,.3)"></div>
<svg style="left:297px;top:1012px" width="50" height="50" viewBox="0 0 50 50"><circle cx="25" cy="25" r="20.500" fill="none" stroke="#e8f2fc" stroke-width="4" stroke-dasharray=".7 1.450"/><path d="M41 9L22.500 22.500l5 5z" fill="#f03a2e"/><path d="M9 41l13.500-18.500 5 5z" fill="#f4f4f4"/><path d="M9 41l16-16 2.500 2.500z" fill="#c8ccd0"/></svg>
<div class="abs" style="left:364px;top:1009px;width:56px;height:56px;border-radius:50%;background:radial-gradient(circle at 50% 30%,#c4ccd0 0%,#8e969b 55%,#6c7378 100%);border:3px solid #dcdee0;box-shadow:0 1px 2px rgba(0,0,0,.3)"></div>
<svg style="left:372px;top:1016px" width="40" height="42" viewBox="0 0 40 42"><path d="M36 3c-12 1-21 9-26 21l6 6c12-5 20-14 20-27z" fill="#3d4246"/><path d="M10 24l-8 3 7-10zM16 30l-3 8 10-7z" fill="#33383b"/><path d="M9 31l-6 9 9-6z" fill="#565b5f"/><circle cx="26" cy="13" r="3" fill="#7e868b"/></svg>
<svg style="left:433px;top:1007px" width="58" height="60" viewBox="0 0 54 56"><ellipse cx="27" cy="36" rx="22" ry="20" fill="#111"/><ellipse cx="27" cy="17" rx="15" ry="16" fill="#111"/><ellipse cx="27" cy="40" rx="14" ry="15" fill="#fff"/><ellipse cx="21.500" cy="13" rx="3.300" ry="4.500" fill="#fff"/><ellipse cx="32.500" cy="13" rx="3.300" ry="4.500" fill="#fff"/><circle cx="22.500" cy="14" r="1.500" fill="#111"/><path d="M31 14q1.500-2 3 0" stroke="#111" stroke-width="1.200" fill="none"/><ellipse cx="27" cy="22" rx="7" ry="2.500" fill="#f5a623"/><path d="M12 28c10 4 20 4 30 0v5c-10 4-20 4-30 0z" fill="#e02b20"/><path d="M16 32h7v12h-7z" fill="#e02b20"/><ellipse cx="16" cy="55" rx="9" ry="3" fill="#f5a623"/><ellipse cx="38" cy="55" rx="9" ry="3" fill="#f5a623"/></svg>
<div class="abs" style="left:502px;top:1009px;width:56px;height:56px;border-radius:50%;background:radial-gradient(circle,#ffffff 0%,#f4f4f6 70%,#dcdce2 100%);border:2px solid #d6d6dc;box-shadow:0 1px 2px rgba(0,0,0,.3)"></div>
<svg style="left:512px;top:1018px" width="36" height="38" viewBox="0 0 30 32"><defs><linearGradient id="it" x1="0" y1="0" x2="1" y2="1"><stop offset="0" stop-color="#f6447c"/><stop offset=".5" stop-color="#a95cf0"/><stop offset="1" stop-color="#2e9bf4"/></linearGradient></defs><path d="M10 6l17-4v19a4.500 4 0 1 1-3-4V8L13 10.500V25a4.500 4 0 1 1-3-4z" fill="url(#it)"/></svg>
<div class="abs" style="left:570px;top:1009px;width:56px;height:56px;border-radius:50%;background:#141414;box-shadow:0 1px 2px rgba(0,0,0,.3)"></div>
<div class="t" style="left:566px;top:1025px;width:80px;text-align:center;font-size:23px;color:#fff;font-weight:bold">tv</div>
<div class="abs" style="left:580px;top:1029px;width:12px;height:14px;border-radius:5px;background:#fff"></div>
<svg style="left:640px;top:1012px" width="60" height="52" viewBox="0 0 60 52"><ellipse cx="22" cy="22" rx="21" ry="18" fill="#5ec93a"/><path d="M8 34l-3 9 10-5z" fill="#5ec93a"/><ellipse cx="40" cy="34" rx="17" ry="14" fill="#f2f2f2"/><path d="M50 44l4 7-10-4z" fill="#f2f2f2"/><circle cx="15" cy="17" r="2.500" fill="#2f7d1b"/><circle cx="29" cy="17" r="2.500" fill="#2f7d1b"/><circle cx="34.500" cy="30" r="2" fill="#888"/><circle cx="46" cy="30" r="2" fill="#888"/></svg>
<svg style="left:711px;top:1010px" width="54" height="54" viewBox="0 0 54 54"><rect width="54" height="54" rx="6" fill="#1e5fa8"/><path d="M0 6a6 6 0 0 1 6-6h42a6 6 0 0 1 6 6v10H0z" fill="#f0a81e"/><path d="M0 16c14-4 26 4 30 18L0 44z" fill="#1f4f8e"/><path d="M14 54l40-26v20a6 6 0 0 1-6 6z" fill="#d42a34"/><path d="M24 30h24v18H24z" fill="#e8e8e8" opacity=".85"/></svg>
<div class="abs" style="left:779px;top:1010px;width:54px;height:54px;border-radius:2px;background:#1f0a3c;border:2px solid #c79cf5"></div>
<div class="t" style="left:766px;top:1019px;width:80px;text-align:center;font-size:34px;color:#c79cf5;letter-spacing:-1px">Ae</div>
<div class="abs" style="left:848px;top:1010px;width:54px;height:54px;border-radius:2px;background:#031c2c;border:3px solid #29c5f6"></div>
<div class="t" style="left:835px;top:1019px;width:80px;text-align:center;font-size:34px;color:#29c5f6;letter-spacing:-1px">Ps</div>
<div class="abs" style="left:914px;top:1007px;width:60px;height:60px;border-radius:50%;background:radial-gradient(circle,#ffffff 60%,#ececec 100%);box-shadow:0 1px 2px rgba(0,0,0,.3)"></div>
<svg style="left:926px;top:1018px" width="36" height="38" viewBox="0 0 36 38"><path d="M3 36L18 3l15 33" stroke="#1d78c8" stroke-width="4.500" fill="none" stroke-linejoin="round"/><path d="M14 27h10l3 5" stroke="#33a5e8" stroke-width="3.500" fill="none"/></svg>
<div class="abs" style="left:989px;top:1029px;width:53px;height:35px;border-radius:4px;transform:rotate(-5deg);background:radial-gradient(circle at 50% 55%,#fff 0%,rgba(255,255,255,.6) 18%,rgba(255,255,255,0) 48%),conic-gradient(from 20deg at 50% 55%,#f23a3a,#e83aa0,#8a4ae0,#2f86f0,#2fc0a0,#5ac83a,#d8e02a,#f5c020,#f58a20,#f23a3a);box-shadow:0 3px 0 #d4d4d4,0 4px 2px rgba(0,0,0,.3)"></div>
<div class="abs" style="left:985px;top:1012px;width:52px;height:8px;border-radius:1px;transform:rotate(-14deg);background:repeating-linear-gradient(115deg,#151515 0 6px,#f2f2f2 6px 12px)"></div>
<div class="abs" style="left:986px;top:1021px;width:53px;height:8px;border-radius:1px;transform:rotate(-8deg);background:repeating-linear-gradient(115deg,#151515 0 6px,#f2f2f2 6px 12px)"></div>
<div class="abs" style="left:1058px;top:1019px;width:50px;height:36px;border-radius:50%;transform:rotate(-24deg);background:radial-gradient(ellipse at 50% 50%,#fff 0%,rgba(255,255,255,.5) 16%,rgba(255,255,255,0) 42%),conic-gradient(from 20deg at 50% 55%,#f23a3a,#e83aa0,#8a4ae0,#2f86f0,#2fc0a0,#5ac83a,#d8e02a,#f5c020,#f58a20,#f23a3a)"></div>
<svg style="left:1053px;top:1008px" width="60" height="60" viewBox="0 0 60 60"><ellipse cx="30" cy="29" rx="6" ry="4.500" transform="rotate(-25 30 29)" fill="#d8dde2" stroke="#8e98a1" stroke-width="1.500"/><ellipse cx="30" cy="29" rx="27.500" ry="19" transform="rotate(-25 30 29)" fill="none" stroke="#b4bcc4" stroke-width="3"/><ellipse cx="30" cy="31" rx="13" ry="27" transform="rotate(-42 30 31)" fill="none" stroke="#a2acb5" stroke-width="2"/><path d="M13 9l16 20" stroke="#bcc4ca" stroke-width="2.500"/><circle cx="13" cy="9" r="2.500" fill="#c4ccd2"/></svg>
<svg style="left:1122px;top:1008px" width="60" height="60" viewBox="0 0 60 60"><defs><linearGradient id="co" x1="0" y1="0" x2="1" y2="0"><stop offset="0" stop-color="#f23a2a"/><stop offset=".5" stop-color="#f5c02a"/><stop offset="1" stop-color="#3ac04a"/></linearGradient></defs><g transform="rotate(-8 30 30)"><rect x="12" y="3" width="34" height="54" fill="#1a1a1a"/><rect x="16" y="4" width="26" height="10" fill="url(#co)"/><rect x="16" y="46" width="26" height="10" fill="url(#co)"/><rect x="4" y="15" width="52" height="30" rx="5" fill="#c9d1d8" stroke="#e8edf0" stroke-width="1"/><path d="M10 14l38 30M50 13L12 46" stroke="#8b949b" stroke-width="3"/><circle cx="30" cy="27" r="7" fill="#e4e8eb" stroke="#8b949b"/><rect x="26" y="30" width="8" height="10" fill="#3a3f44"/></g></svg>
<div class="abs" style="left:1192px;top:1009px;width:56px;height:56px;border-radius:2px;background:#14222e;border:3px solid #a8cdea"></div>
<div class="t" style="left:1180px;top:1019px;width:80px;text-align:center;font-size:35px;color:#a8cdea;">Lr</div>
<div class="abs" style="left:1261px;top:1009px;width:56px;height:56px;border-radius:1px;background:linear-gradient(135deg,#4a4a4a,#222 50%,#3a3a3a);"></div>
<div class="t" style="left:1296px;top:1010px;font-size:24px;color:#9a9a9a;font-weight:bold">R</div>
<div class="t" style="left:1265px;top:1030px;font-size:17px;color:#2f8fd0;font-family:'Liberation Serif',serif;transform:rotate(-12deg)">Time</div>
<div class="t" style="left:1264px;top:1044px;font-size:17px;color:#2f8fd0;font-family:'Liberation Serif',serif;transform:rotate(-12deg)">lapse<span style="color:#e8642a;font-style:italic">5</span></div>
<svg style="left:1329px;top:1009px" width="60" height="58" viewBox="0 0 60 58"><rect x="24" y="8" width="34" height="42" rx="2" fill="#f4f4f4"/><circle cx="46" cy="22" r="7" fill="#444"/><path d="M46 22v-8a8 8 0 0 1 8 8z" fill="#e8553a"/><path d="M36 36h20M36 42h20" stroke="#e8553a" stroke-width="2.500"/><path d="M2 6l32-6v58L2 52z" fill="#e04a2e"/><path d="M12 18h8c6 0 9 3 9 7.500S26 33 20 33h-3v8h-5zm5 4v7h3c2.500 0 4-1 4-3.500S22.500 22 20 22z" fill="#fff"/></svg>
<svg style="left:1400px;top:1007px" width="56" height="62" viewBox="0 0 56 62"><path d="M7 2h40l7 22H1z" fill="#2b80e4"/><path d="M1 24h53v3H1z" fill="#1a5cb8"/><path d="M12 5h31l3 15H10z" fill="#f4f6f8"/><circle cx="21" cy="13" r="5" fill="#4ac0e8"/><path d="M21 13V8a5 5 0 0 1 4.500 7z" fill="#f0c030"/><path d="M21 13l4.500 2a5 5 0 0 1-6 2.500z" fill="#58c84a"/><path d="M29 8h12M29 11h12M29 14h10M29 17h8" stroke="#c8ccd2" stroke-width="1.200"/><rect x="26" y="27" width="4" height="26" fill="#c0cad4"/><ellipse cx="28" cy="56" rx="12" ry="4" fill="#a8b8c8"/><ellipse cx="28" cy="55" rx="9" ry="2.500" fill="#c8d4e0"/></svg>
<div class="abs" style="left:1466px;top:1007px;width:60px;height:60px;border-radius:50%;background:radial-gradient(circle,#e0202a 0%,#c4141e 75%,#a80c16 100%);border:3px solid #e9e6e6;box-shadow:0 1px 2px rgba(0,0,0,.3)"></div>
<div class="t" style="left:1456px;top:1022px;width:80px;text-align:center;font-size:13px;color:#fff;font-weight:bold">Get</div>
<div class="abs" style="left:1479px;top:1037px;width:34px;height:17px;border-radius:4px;background:#fff"></div>
<div class="t" style="left:1456px;top:1039px;width:80px;text-align:center;font-size:13px;color:#c4141e;font-weight:bold">Tube</div>
<div class="abs" style="left:1538px;top:1012px;width:56px;height:52px;border-radius:3px;background:linear-gradient(#bccdd5,#8e979c 45%,#5c5f62);border:1px solid #6a7074;box-shadow:0 1px 2px rgba(0,0,0,.35)"></div>
<svg style="left:1542px;top:1014px" width="48" height="48" viewBox="0 0 48 48"><circle cx="24" cy="24" r="20" fill="none" stroke="#34373a" stroke-width="6" stroke-dasharray="3.800 3.200"/><circle cx="24" cy="24" r="17.500" fill="#9aa0a5" stroke="#34373a" stroke-width="2.500"/><circle cx="24" cy="24" r="13" fill="#45484b"/><path d="M24 24V11M24 24l-11.300 6.500M24 24l11.300 6.500" stroke="#aab0b5" stroke-width="3.500"/><circle cx="24" cy="24" r="3" fill="#c4c8cc"/></svg>
<div class="abs" style="left:1616px;top:1010px;width:1px;height:56px;background:#9a9a9a"></div>
<svg style="left:1640px;top:1008px" width="50" height="60" viewBox="0 0 50 60"><path d="M3 8h44l-5 48c0 2-2 3-4 3H12c-2 0-4-1-4-3z" fill="#ececed" stroke="#d6d8da" stroke-width="1"/><ellipse cx="25" cy="8" rx="21.500" ry="5.500" fill="#d8dadc" stroke="#f4f4f4" stroke-width="1.500"/><path d="M8 7l6-6 6 7 5-7 7 8 6-7 4 5" stroke="#8e8e8e" stroke-width="2.500" fill="none"/><path d="M20 7l4-5 4 5z" fill="#3a7ad0"/><path d="M30 8l4-6 3 6z" fill="#a03a2a"/><path d="M13 7l4-4 3 5z" fill="#d8d8d8"/><path d="M14 16l3 38M25 17v38M36 16l-3 38" stroke="#d4d6d8" stroke-width="1.500"/></svg>
<div class="abs" style="left:252px;top:1074px;width:4px;height:4px;border-radius:2px;background:#222"></div>
<div class="abs" style="left:320px;top:1074px;width:4px;height:4px;border-radius:2px;background:#222"></div>
<div class="abs" style="left:1011px;top:1074px;width:4px;height:4px;border-radius:2px;background:#222"></div>
<div class="abs" style="left:1563px;top:1074px;width:4px;height:4px;border-radius:2px;background:#222"></div>
<div class="abs" style="left:302px;top:0;width:556px;height:1080px;overflow:hidden">
<div class="stripe" style="top:38px;height:10px"></div>
<div class="stripe" style="top:64px;height:16px"><span style="top:-1px;color:#000;font-weight:bold">新建</span><b style="top:1px"></b><b style="top:4px"></b><b style="top:7px"></b><b style="top:10px"></b><b style="top:13px"></b><i style="left:514px;top:1px;width:0;height:0;border-left:15px solid #000;border-top:4px solid transparent;border-bottom:4px solid transparent"></i></div>
<div class="stripe" style="top:96px;height:16px"><span style="top:9px;color:#000;font-weight:bold">打开资源库</span><b style="top:1px"></b><b style="top:4px"></b><b style="top:7px"></b><b style="top:10px"></b><b style="top:13px"></b><i style="left:0;top:2px;width:556px;height:1px;background:rgba(90,255,130,.8)"></i><i style="left:514px;top:11px;width:0;height:0;border-left:15px solid #000;border-top:4px solid transparent;border-bottom:4px solid transparent"></i></div>
<div class="stripe" style="top:128px;height:16px"><span style="top:-7px;color:#000;font-weight:bold">打开资源库</span><b style="top:1px"></b><b style="top:4px"></b><b style="top:7px"></b><b style="top:10px"></b><b style="top:13px"></b><i style="left:514px;top:1px;width:0;height:0;border-left:15px solid #000;border-top:4px solid transparent;border-bottom:4px solid transparent"></i></div>
<div class="stripe" style="top:160px;height:16px"><span style="top:-2px;color:#00e000">关闭资源库“练习”</span><b style="top:1px"></b><b style="top:3px"></b><b style="top:5px"></b><b style="top:7px"></b><b style="top:9px"></b><b style="top:11px"></b><b style="top:13px"></b><b style="top:15px"></b></div>
<div class="stripe" style="top:192px;height:16px"><span style="top:1px;color:#083">资源库属性</span><span style="top:1px;left:486px;color:#000;transform:scaleX(1.3)"> ^⌘J</span><b style="top:1px"></b><b style="top:3px"></b><b style="top:5px"></b><b style="top:7px"></b><b style="top:9px"></b><b style="top:11px"></b><b style="top:13px"></b><b style="top:15px"></b></div>
<div class="stripe" style="top:224px;height:16px"><i style="left:0;top:8px;width:556px;height:1px;background:rgba(90,255,130,.8)"></i></div>
<div class="stripe" style="top:256px;height:16px"><span style="top:0px;color:#000;font-weight:bold">导入</span><b style="top:1px"></b><b style="top:4px"></b><b style="top:7px"></b><b style="top:10px"></b><b style="top:13px"></b><i style="left:514px;top:1px;width:0;height:0;border-left:15px solid #000;border-top:4px solid transparent;border-bottom:4px solid transparent"></i></div>
<div class="stripe" style="top:288px;height:16px"><span style="top:2px;color:#00e000">转码媒体…</span><b style="top:1px"></b><b style="top:3px"></b><b style="top:5px"></b><b style="top:7px"></b><b style="top:9px"></b><b style="top:11px"></b><b style="top:13px"></b><b style="top:15px"></b></div>
<div class="stripe" style="top:320px;height:16px"><span style="top:1px;color:#00e000">重新链接文件</span><b style="top:1px"></b><b style="top:3px"></b><b style="top:5px"></b><b style="top:7px"></b><b style="top:9px"></b><b style="top:11px"></b><b style="top:13px"></b><b style="top:15px"></b></div>
<div class="stripe" style="top:352px;height:16px"><span style="top:-9px;color:#063">导出 XML…</span><b style="top:1px"></b><b style="top:3px"></b><b style="top:5px"></b><b style="top:7px"></b><b style="top:9px"></b><b style="top:11px"></b><b style="top:13px"></b><b style="top:15px"></b></div>
<div class="stripe" style="top:384px;height:16px"><span style="top:-1px;color:#000;font-weight:bold">导入 iMovie</span><b style="top:1px"></b><b style="top:4px"></b><b style="top:7px"></b><b style="top:10px"></b><b style="top:13px"></b></div>
<div class="stripe" style="top:416px;height:16px"><span style="top:-5px;color:#000;font-weight:bold">共享 XML</span><b style="top:1px"></b><b style="top:4px"></b><b style="top:7px"></b><b style="top:10px"></b><b style="top:13px"></b></div>
<div class="stripe" style="top:448px;height:16px"><span style="top:8px;color:#00e000">发送到</span><b style="top:1px"></b><b style="top:3px"></b><b style="top:5px"></b><b style="top:7px"></b><b style="top:9px"></b><b style="top:11px"></b><b style="top:13px"></b><b style="top:15px"></b></div>
<div class="stripe" style="top:480px;height:16px"><span style="top:-1px;color:#000;font-weight:bold">共享</span><b style="top:1px"></b><b style="top:4px"></b><b style="top:7px"></b><b style="top:10px"></b><b style="top:13px"></b><i style="left:514px;top:1px;width:0;height:0;border-left:15px solid #000;border-top:4px solid transparent;border-bottom:4px solid transparent"></i></div>
<div class="stripe" style="top:512px;height:16px"><span style="top:6px;color:#000;font-weight:bold">发送到 Compressor</span><b style="top:1px"></b><b style="top:4px"></b><b style="top:7px"></b><b style="top:10px"></b><b style="top:13px"></b></div>
<div class="stripe" style="top:544px;height:16px"><span style="top:4px;color:#000;font-weight:bold">将 iTMS 项目发送到 Compressor</span><b style="top:1px"></b><b style="top:4px"></b><b style="top:7px"></b><b style="top:10px"></b><b style="top:13px"></b></div>
<div class="stripe" style="top:576px;height:16px"><span style="top:-8px;color:#000;font-weight:bold">存储视频效果预置</span><b style="top:1px"></b><b style="top:4px"></b><b style="top:7px"></b><b style="top:10px"></b><b style="top:13px"></b></div>
<div class="stripe" style="top:608px;height:16px"><span style="top:5px;color:#000;font-weight:bold">存储视频效果预置…</span><b style="top:1px"></b><b style="top:4px"></b><b style="top:7px"></b><b style="top:10px"></b><b style="top:13px"></b></div>
<div class="stripe" style="top:640px;height:16px"><span style="top:0px;color:#063">存储音频效果预置</span><b style="top:1px"></b><b style="top:3px"></b><b style="top:5px"></b><b style="top:7px"></b><b style="top:9px"></b><b style="top:11px"></b><b style="top:13px"></b><b style="top:15px"></b></div>
<div class="stripe" style="top:672px;height:16px"><span style="top:2px;color:#00e000">拷贝到资源库</span><b style="top:1px"></b><b style="top:3px"></b><b style="top:5px"></b><b style="top:7px"></b><b style="top:9px"></b><b style="top:11px"></b><b style="top:13px"></b><b style="top:15px"></b></div>
<div class="stripe" style="top:704px;height:16px"><span style="top:9px;color:#00e000">移到</span><b style="top:1px"></b><b style="top:3px"></b><b style="top:5px"></b><b style="top:7px"></b><b style="top:9px"></b><b style="top:11px"></b><b style="top:13px"></b><b style="top:15px"></b></div>
<div class="stripe" style="top:736px;height:16px"><span style="top:-4px;color:#00e000">整合事件媒体</span><b style="top:1px"></b><b style="top:3px"></b><b style="top:5px"></b><b style="top:7px"></b><b style="top:9px"></b><b style="top:11px"></b><b style="top:13px"></b><b style="top:15px"></b></div>
<div class="stripe" style="top:768px;height:16px"><span style="top:1px;color:#00e000">合并事件</span><b style="top:1px"></b><b style="top:3px"></b><b style="top:5px"></b><b style="top:7px"></b><b style="top:9px"></b><b style="top:11px"></b><b style="top:13px"></b><b style="top:15px"></b></div>
<div class="stripe" style="top:800px;height:16px"><span style="top:3px;color:#00e000">删除生成的事件文件</span><b style="top:1px"></b><b style="top:3px"></b><b style="top:5px"></b><b style="top:7px"></b><b style="top:9px"></b><b style="top:11px"></b><b style="top:13px"></b><b style="top:15px"></b></div>
<div class="stripe" style="top:832px;height:16px"><span style="top:0px;color:#00e000">关闭其他资源库</span><b style="top:1px"></b><b style="top:3px"></b><b style="top:5px"></b><b style="top:7px"></b><b style="top:9px"></b><b style="top:11px"></b><b style="top:13px"></b><b style="top:15px"></b></div>
<div class="stripe" style="top:864px;height:16px"><span style="top:3px;color:#00e000">整合资源库媒体文件夹</span><b style="top:1px"></b><b style="top:3px"></b><b style="top:5px"></b><b style="top:7px"></b><b style="top:9px"></b><b style="top:11px"></b><b style="top:13px"></b><b style="top:15px"></b></div>
<div class="stripe" style="top:896px;height:16px"><span style="top:-8px;color:#00e000">删除生成的</span><b style="top:1px"></b><b style="top:3px"></b><b style="top:5px"></b><b style="top:7px"></b><b style="top:9px"></b><b style="top:11px"></b><b style="top:13px"></b><b style="top:15px"></b></div>
<div class="stripe" style="top:928px;height:16px"><span style="top:-9px;color:#00e000">合并</span><b style="top:1px"></b><b style="top:3px"></b><b style="top:5px"></b><b style="top:7px"></b><b style="top:9px"></b><b style="top:11px"></b><b style="top:13px"></b><b style="top:15px"></b></div>
<div class="stripe" style="top:960px;height:16px"><span style="top:6px;color:#000">在访达中显示</span><span style="top:6px;left:486px;color:#000;transform:scaleX(1.3)">⇧⌘R</span><b style="top:1px"></b><b style="top:3px"></b><b style="top:5px"></b><b style="top:7px"></b><b style="top:9px"></b><b style="top:11px"></b><b style="top:13px"></b><b style="top:15px"></b></div>
<div class="stripe" style="top:992px;height:16px"><span style="top:-6px;color:#000">在访达中显示</span><span style="top:-6px;left:486px;color:#000;transform:scaleX(1.3)">⌘</span><b style="top:1px"></b><b style="top:3px"></b><b style="top:5px"></b><b style="top:7px"></b><b style="top:9px"></b><b style="top:11px"></b><b style="top:13px"></b><b style="top:15px"></b></div>
<div class="stripe" style="top:1024px;height:16px"><span style="top:0px;color:#000">移到访达中废纸篓</span><span style="top:0px;left:486px;color:#000;transform:scaleX(1.3)">⌥⌘⌫</span><b style="top:1px"></b><b style="top:3px"></b><b style="top:5px"></b><b style="top:7px"></b><b style="top:9px"></b><b style="top:11px"></b><b style="top:13px"></b><b style="top:15px"></b></div>
<div class="stripe" style="top:1056px;height:16px"><span style="top:1px;color:#000">移到废纸篓</span><span style="top:1px;left:486px;color:#000;transform:scaleX(1.3)">⌘⌫</span><b style="top:1px"></b><b style="top:3px"></b><b style="top:5px"></b><b style="top:7px"></b><b style="top:9px"></b><b style="top:11px"></b><b style="top:13px"></b><b style="top:15px"></b></div>
</div>
</div></body></html>
